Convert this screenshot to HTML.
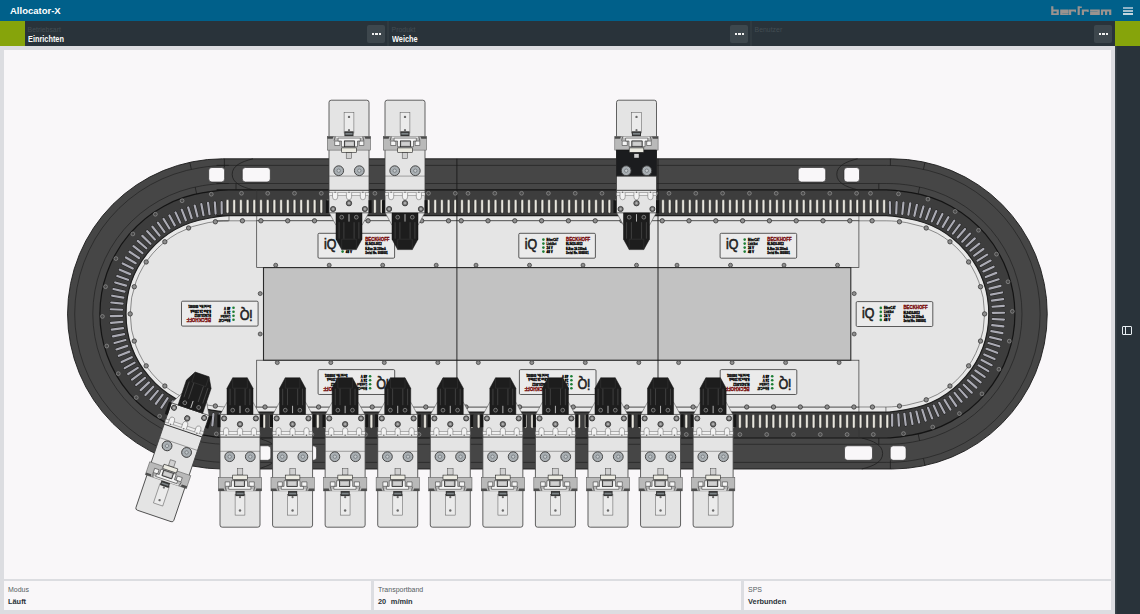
<!DOCTYPE html>
<html><head><meta charset="utf-8"><style>
html,body{margin:0;padding:0}
body{width:1140px;height:614px;overflow:hidden;position:relative;background:#dcdde1;font-family:"Liberation Sans",sans-serif}
.t{position:absolute;white-space:nowrap;line-height:1}
#hdr{position:absolute;left:0;top:0;width:1140px;height:21px;background:#00608a}
#bar{position:absolute;left:0;top:21px;width:1140px;height:25px;background:#29333a}
.lab{font-size:6.9px;color:#434d53;transform-origin:0 100%;transform:scale(1,1.1)}
.val{font-size:7.5px;font-weight:bold;color:#fbfbfb;transform-origin:0 100%;transform:scale(0.98,1.14)}
.btn{position:absolute;width:18px;height:18px;border-radius:2px;background:#3d474d}
.btn i{position:absolute;top:7.7px;width:2.2px;height:2.2px;background:#f0f0f0}
#side{position:absolute;left:1115px;top:46px;width:25px;height:568px;background:#29333a;box-shadow:inset 1.5px 0 0 #3a444a}
#card{position:absolute;left:4px;top:50.4px;width:1107px;height:528.2px;background:#f9f7f9}
.fc{position:absolute;top:581px;width:367px;height:28.8px;background:#f9f7f9}
.flab{font-size:7px;color:#555d62}
.fval{font-size:7.4px;font-weight:bold;color:#2a3338;word-spacing:2.6px}
</style></head>
<body>
<div id="hdr"></div>
<div class="t" style="left:10px;top:5.6px;font-size:9.5px;font-weight:bold;color:#fff">Allocator-X</div>
<svg style="position:absolute;left:0;top:0" width="1140" height="22"><path d="M1051.2,6.2h2.2v8.8h-2.2zM1051.2,9.5h7.6v1.9h-7.6zM1051.2,13.2h7.6v1.8h-7.6zM1056.6,9.5h2.2v5.5h-2.2zM1060.2,9.5h8.5v1.9h-8.5zM1060.2,9.5h2.1v5.5h-2.1zM1060.2,13.2h8.5v1.8h-8.5zM1060.2,11.5h8.5v1.4h-8.5zM1066.6,9.5h2.1v3.4h-2.1zM1069.0,9.5h2.2v5.5h-2.2zM1069.0,9.5h7.0v1.9h-7.0zM1074.6,9.5h1.4v2.7h-1.4zM1077.6,6.2h2.2v8.8h-2.2zM1077.6,6.6h4.2v1.4h-4.2zM1081.8,9.5h2.2v5.5h-2.2zM1081.8,9.5h6.9v1.9h-6.9zM1087.3,9.5h1.4v2.6h-1.4zM1090.1,9.5h9.7v1.9h-9.7zM1097.6,9.5h2.2v5.5h-2.2zM1090.1,11.8h9.7v1.4h-9.7zM1090.1,11.8h2.1v3.2h-2.1zM1090.1,13.2h9.7v1.8h-9.7zM1100.9,9.5h10.4v1.9h-10.4zM1100.9,9.5h2.2v5.5h-2.2zM1105.0,9.5h2.2v5.5h-2.2zM1109.1,9.5h2.2v5.5h-2.2z" fill="#9a938f"/></svg>
<div style="position:absolute;left:1122.8px;top:7.1px;width:10px;height:1.5px;background:#8db3c7"></div>
<div style="position:absolute;left:1122.8px;top:10.1px;width:10px;height:1.5px;background:#a3bfce"></div>
<div style="position:absolute;left:1122.8px;top:13.1px;width:10px;height:1.5px;background:#c3d6df"></div>
<div id="bar"></div>
<div style="position:absolute;left:0;top:21px;width:25px;height:25px;background:#86a40b"></div>
<div style="position:absolute;left:1115px;top:21px;width:25px;height:25px;background:#86a40b"></div>
<div class="t lab" style="left:27.6px;top:27.2px">Betriebsart</div>
<div class="t val" style="left:27.6px;top:35.8px">Einrichten</div>
<div class="btn" style="left:367.4px;top:25px"><i style="left:4.2px"></i><i style="left:8px"></i><i style="left:11.8px"></i></div>
<div style="position:absolute;left:387.4px;top:21px;width:1.5px;height:25px;background:#303a40"></div>
<div class="t lab" style="left:391.6px;top:27.2px">Produkt</div>
<div class="t val" style="left:391.6px;top:35.8px">Weiche</div>
<div class="btn" style="left:730.4px;top:25px"><i style="left:4.2px"></i><i style="left:8px"></i><i style="left:11.8px"></i></div>
<div style="position:absolute;left:750.4px;top:21px;width:1.5px;height:25px;background:#303a40"></div>
<div class="t lab" style="left:754.6px;top:27.2px">Benutzer</div>
<div class="btn" style="left:1094.4px;top:25px"><i style="left:4.2px"></i><i style="left:8px"></i><i style="left:11.8px"></i></div>
<div id="side"></div>
<div style="position:absolute;left:1122.1px;top:325.6px;width:8px;height:7.8px;border:1.1px solid #e8eef2;border-radius:1px"></div>
<div style="position:absolute;left:1125.4px;top:325.6px;width:1.1px;height:9.8px;background:#e8eef2"></div>
<div id="card"></div>
<div class="fc" style="left:4px"></div>
<div class="t flab" style="left:8px;top:586.4px">Modus</div>
<div class="t fval" style="left:8px;top:598.2px">Läuft</div>
<div class="fc" style="left:374px"></div>
<div class="t flab" style="left:378px;top:586.4px">Transportband</div>
<div class="t fval" style="left:378px;top:598.2px">20 m/min</div>
<div class="fc" style="left:744px"></div>
<div class="t flab" style="left:748px;top:586.4px">SPS</div>
<div class="t fval" style="left:748px;top:598.2px">Verbunden</div>
<svg style="position:absolute;left:0;top:0" width="1140" height="614" viewBox="0 0 1140 614">
<path d="M222.60,158.80 H892.20 A155.10,155.10 0 0 1 892.20,469.00 H222.60 A155.10,155.10 0 0 1 222.60,158.80 Z" fill="#464646" stroke="#1c1c1c" stroke-width="0.9"/>
<path d="M216.60,165.40 H886.20 C897.77,165.40 903.91,166.01 915.34,167.82 A147.90,147.90 0 0 1 915.34,459.98 C903.91,461.79 897.77,462.40 886.20,462.40 H228.60 C217.03,462.40 210.89,461.79 199.46,459.98 A147.90,147.90 0 0 1 199.46,167.82 C210.89,166.01 217.03,165.40 228.60,165.40 Z" fill="none" stroke="#222" stroke-width="0.7"/>
<path d="M216.60,183.50 H886.20 C896.35,183.50 902.48,184.11 912.51,185.70 A129.80,129.80 0 0 1 912.51,442.10 C902.48,443.69 896.35,444.30 886.20,444.30 H228.60 C218.45,444.30 212.32,443.69 202.29,442.10 A129.80,129.80 0 0 1 202.29,185.70 C212.32,184.11 218.45,183.50 228.60,183.50 Z" fill="none" stroke="#222" stroke-width="0.7"/>
<path d="M253.0,158.8 C241.0,161.8 232.2,165.8 232.2,174.3 C232.2,182.8 241.0,186.8 253.0,189.8 M857.6,158.8 C845.6,161.8 836.8000000000001,165.8 836.8000000000001,174.3 C836.8000000000001,182.8 845.6,186.8 857.6,189.8 M224.4,158.8 V167.5 M236,183.5 V189.8 M890.4,158.8 V165.4 M878.8,183.5 V189.8 M191.35,169.34 L189.82,162.3 M195.17,187.03 L196.67,193.97 M923.45,169.34 L924.98,162.3 M919.63,187.03 L918.13,193.97" fill="none" stroke="#1a1a1a" stroke-width="0.7"/>
<path d="M253.0,158.8 C241.0,161.8 232.2,165.8 232.2,174.3 C232.2,182.8 241.0,186.8 253.0,189.8 M857.6,158.8 C845.6,161.8 836.8000000000001,165.8 836.8000000000001,174.3 C836.8000000000001,182.8 845.6,186.8 857.6,189.8 M224.4,158.8 V167.5 M236,183.5 V189.8 M890.4,158.8 V165.4 M878.8,183.5 V189.8 M191.35,169.34 L189.82,162.3 M195.17,187.03 L196.67,193.97 M923.45,169.34 L924.98,162.3 M919.63,187.03 L918.13,193.97" fill="none" stroke="#1a1a1a" stroke-width="0.7" transform="rotate(180 557.4 313.9)"/>
<rect x="208.7" y="167.5" width="15.9" height="14.5" rx="3.2" fill="#f9f7f9" stroke="#222" stroke-width="0.6"/>
<rect x="208.7" y="167.5" width="15.9" height="14.5" rx="3.2" fill="#f9f7f9" stroke="#222" stroke-width="0.6" transform="rotate(180 557.4 313.9)"/>
<rect x="242.3" y="167.5" width="28" height="14.5" rx="3.2" fill="#f9f7f9" stroke="#222" stroke-width="0.6"/>
<rect x="242.3" y="167.5" width="28" height="14.5" rx="3.2" fill="#f9f7f9" stroke="#222" stroke-width="0.6" transform="rotate(180 557.4 313.9)"/>
<rect x="798.2" y="167.5" width="27.5" height="14.5" rx="3.2" fill="#f9f7f9" stroke="#222" stroke-width="0.6"/>
<rect x="798.2" y="167.5" width="27.5" height="14.5" rx="3.2" fill="#f9f7f9" stroke="#222" stroke-width="0.6" transform="rotate(180 557.4 313.9)"/>
<rect x="844" y="167.5" width="15.5" height="14.5" rx="3.2" fill="#f9f7f9" stroke="#222" stroke-width="0.6"/>
<rect x="844" y="167.5" width="15.5" height="14.5" rx="3.2" fill="#f9f7f9" stroke="#222" stroke-width="0.6" transform="rotate(180 557.4 313.9)"/>
<path d="M216.60,189.80 H886.20 C895.80,189.80 901.92,191.21 911.39,192.71 A122.70,122.70 0 0 1 911.39,435.09 C901.92,436.59 895.80,438.00 886.20,438.00 H228.60 C219.00,438.00 212.88,436.59 203.41,435.09 A122.70,122.70 0 0 1 203.41,192.71 C212.88,191.21 219.00,189.80 228.60,189.80 Z" fill="#3d3d3d" stroke="#141414" stroke-width="1.2"/>
<g fill="#e8e6de" stroke="#161616" stroke-width="0.45"><rect x="226.15" y="199.6" width="2.7" height="13.6" rx="1.1"/><rect x="885.95" y="414.6" width="2.7" height="13.6" rx="1.1"/><rect x="232.85" y="199.6" width="2.7" height="13.6" rx="1.1"/><rect x="879.25" y="414.6" width="2.7" height="13.6" rx="1.1"/><rect x="239.55" y="199.6" width="2.7" height="13.6" rx="1.1"/><rect x="872.55" y="414.6" width="2.7" height="13.6" rx="1.1"/><rect x="246.25" y="199.6" width="2.7" height="13.6" rx="1.1"/><rect x="865.85" y="414.6" width="2.7" height="13.6" rx="1.1"/><rect x="252.95" y="199.6" width="2.7" height="13.6" rx="1.1"/><rect x="859.15" y="414.6" width="2.7" height="13.6" rx="1.1"/><rect x="259.65" y="199.6" width="2.7" height="13.6" rx="1.1"/><rect x="852.45" y="414.6" width="2.7" height="13.6" rx="1.1"/><rect x="266.35" y="199.6" width="2.7" height="13.6" rx="1.1"/><rect x="845.75" y="414.6" width="2.7" height="13.6" rx="1.1"/><rect x="273.05" y="199.6" width="2.7" height="13.6" rx="1.1"/><rect x="839.05" y="414.6" width="2.7" height="13.6" rx="1.1"/><rect x="279.75" y="199.6" width="2.7" height="13.6" rx="1.1"/><rect x="832.35" y="414.6" width="2.7" height="13.6" rx="1.1"/><rect x="286.45" y="199.6" width="2.7" height="13.6" rx="1.1"/><rect x="825.65" y="414.6" width="2.7" height="13.6" rx="1.1"/><rect x="293.15" y="199.6" width="2.7" height="13.6" rx="1.1"/><rect x="818.95" y="414.6" width="2.7" height="13.6" rx="1.1"/><rect x="299.85" y="199.6" width="2.7" height="13.6" rx="1.1"/><rect x="812.25" y="414.6" width="2.7" height="13.6" rx="1.1"/><rect x="306.55" y="199.6" width="2.7" height="13.6" rx="1.1"/><rect x="805.55" y="414.6" width="2.7" height="13.6" rx="1.1"/><rect x="313.25" y="199.6" width="2.7" height="13.6" rx="1.1"/><rect x="798.85" y="414.6" width="2.7" height="13.6" rx="1.1"/><rect x="319.95" y="199.6" width="2.7" height="13.6" rx="1.1"/><rect x="792.15" y="414.6" width="2.7" height="13.6" rx="1.1"/><rect x="326.65" y="199.6" width="2.7" height="13.6" rx="1.1"/><rect x="785.45" y="414.6" width="2.7" height="13.6" rx="1.1"/><rect x="333.35" y="199.6" width="2.7" height="13.6" rx="1.1"/><rect x="778.75" y="414.6" width="2.7" height="13.6" rx="1.1"/><rect x="340.05" y="199.6" width="2.7" height="13.6" rx="1.1"/><rect x="772.05" y="414.6" width="2.7" height="13.6" rx="1.1"/><rect x="346.75" y="199.6" width="2.7" height="13.6" rx="1.1"/><rect x="765.35" y="414.6" width="2.7" height="13.6" rx="1.1"/><rect x="353.45" y="199.6" width="2.7" height="13.6" rx="1.1"/><rect x="758.65" y="414.6" width="2.7" height="13.6" rx="1.1"/><rect x="360.15" y="199.6" width="2.7" height="13.6" rx="1.1"/><rect x="751.95" y="414.6" width="2.7" height="13.6" rx="1.1"/><rect x="366.85" y="199.6" width="2.7" height="13.6" rx="1.1"/><rect x="745.25" y="414.6" width="2.7" height="13.6" rx="1.1"/><rect x="373.55" y="199.6" width="2.7" height="13.6" rx="1.1"/><rect x="738.55" y="414.6" width="2.7" height="13.6" rx="1.1"/><rect x="380.25" y="199.6" width="2.7" height="13.6" rx="1.1"/><rect x="731.85" y="414.6" width="2.7" height="13.6" rx="1.1"/><rect x="386.95" y="199.6" width="2.7" height="13.6" rx="1.1"/><rect x="725.15" y="414.6" width="2.7" height="13.6" rx="1.1"/><rect x="393.65" y="199.6" width="2.7" height="13.6" rx="1.1"/><rect x="718.45" y="414.6" width="2.7" height="13.6" rx="1.1"/><rect x="400.35" y="199.6" width="2.7" height="13.6" rx="1.1"/><rect x="711.75" y="414.6" width="2.7" height="13.6" rx="1.1"/><rect x="407.05" y="199.6" width="2.7" height="13.6" rx="1.1"/><rect x="705.05" y="414.6" width="2.7" height="13.6" rx="1.1"/><rect x="413.75" y="199.6" width="2.7" height="13.6" rx="1.1"/><rect x="698.35" y="414.6" width="2.7" height="13.6" rx="1.1"/><rect x="420.45" y="199.6" width="2.7" height="13.6" rx="1.1"/><rect x="691.65" y="414.6" width="2.7" height="13.6" rx="1.1"/><rect x="427.15" y="199.6" width="2.7" height="13.6" rx="1.1"/><rect x="684.95" y="414.6" width="2.7" height="13.6" rx="1.1"/><rect x="433.85" y="199.6" width="2.7" height="13.6" rx="1.1"/><rect x="678.25" y="414.6" width="2.7" height="13.6" rx="1.1"/><rect x="440.55" y="199.6" width="2.7" height="13.6" rx="1.1"/><rect x="671.55" y="414.6" width="2.7" height="13.6" rx="1.1"/><rect x="447.25" y="199.6" width="2.7" height="13.6" rx="1.1"/><rect x="664.85" y="414.6" width="2.7" height="13.6" rx="1.1"/><rect x="453.95" y="199.6" width="2.7" height="13.6" rx="1.1"/><rect x="658.15" y="414.6" width="2.7" height="13.6" rx="1.1"/><rect x="460.65" y="199.6" width="2.7" height="13.6" rx="1.1"/><rect x="651.45" y="414.6" width="2.7" height="13.6" rx="1.1"/><rect x="467.35" y="199.6" width="2.7" height="13.6" rx="1.1"/><rect x="644.75" y="414.6" width="2.7" height="13.6" rx="1.1"/><rect x="474.05" y="199.6" width="2.7" height="13.6" rx="1.1"/><rect x="638.05" y="414.6" width="2.7" height="13.6" rx="1.1"/><rect x="480.75" y="199.6" width="2.7" height="13.6" rx="1.1"/><rect x="631.35" y="414.6" width="2.7" height="13.6" rx="1.1"/><rect x="487.45" y="199.6" width="2.7" height="13.6" rx="1.1"/><rect x="624.65" y="414.6" width="2.7" height="13.6" rx="1.1"/><rect x="494.15" y="199.6" width="2.7" height="13.6" rx="1.1"/><rect x="617.95" y="414.6" width="2.7" height="13.6" rx="1.1"/><rect x="500.85" y="199.6" width="2.7" height="13.6" rx="1.1"/><rect x="611.25" y="414.6" width="2.7" height="13.6" rx="1.1"/><rect x="507.55" y="199.6" width="2.7" height="13.6" rx="1.1"/><rect x="604.55" y="414.6" width="2.7" height="13.6" rx="1.1"/><rect x="514.25" y="199.6" width="2.7" height="13.6" rx="1.1"/><rect x="597.85" y="414.6" width="2.7" height="13.6" rx="1.1"/><rect x="520.95" y="199.6" width="2.7" height="13.6" rx="1.1"/><rect x="591.15" y="414.6" width="2.7" height="13.6" rx="1.1"/><rect x="527.65" y="199.6" width="2.7" height="13.6" rx="1.1"/><rect x="584.45" y="414.6" width="2.7" height="13.6" rx="1.1"/><rect x="534.35" y="199.6" width="2.7" height="13.6" rx="1.1"/><rect x="577.75" y="414.6" width="2.7" height="13.6" rx="1.1"/><rect x="541.05" y="199.6" width="2.7" height="13.6" rx="1.1"/><rect x="571.05" y="414.6" width="2.7" height="13.6" rx="1.1"/><rect x="547.75" y="199.6" width="2.7" height="13.6" rx="1.1"/><rect x="564.35" y="414.6" width="2.7" height="13.6" rx="1.1"/><rect x="554.45" y="199.6" width="2.7" height="13.6" rx="1.1"/><rect x="557.65" y="414.6" width="2.7" height="13.6" rx="1.1"/><rect x="561.15" y="199.6" width="2.7" height="13.6" rx="1.1"/><rect x="550.95" y="414.6" width="2.7" height="13.6" rx="1.1"/><rect x="567.85" y="199.6" width="2.7" height="13.6" rx="1.1"/><rect x="544.25" y="414.6" width="2.7" height="13.6" rx="1.1"/><rect x="574.55" y="199.6" width="2.7" height="13.6" rx="1.1"/><rect x="537.55" y="414.6" width="2.7" height="13.6" rx="1.1"/><rect x="581.25" y="199.6" width="2.7" height="13.6" rx="1.1"/><rect x="530.85" y="414.6" width="2.7" height="13.6" rx="1.1"/><rect x="587.95" y="199.6" width="2.7" height="13.6" rx="1.1"/><rect x="524.15" y="414.6" width="2.7" height="13.6" rx="1.1"/><rect x="594.65" y="199.6" width="2.7" height="13.6" rx="1.1"/><rect x="517.45" y="414.6" width="2.7" height="13.6" rx="1.1"/><rect x="601.35" y="199.6" width="2.7" height="13.6" rx="1.1"/><rect x="510.75" y="414.6" width="2.7" height="13.6" rx="1.1"/><rect x="608.05" y="199.6" width="2.7" height="13.6" rx="1.1"/><rect x="504.05" y="414.6" width="2.7" height="13.6" rx="1.1"/><rect x="614.75" y="199.6" width="2.7" height="13.6" rx="1.1"/><rect x="497.35" y="414.6" width="2.7" height="13.6" rx="1.1"/><rect x="621.45" y="199.6" width="2.7" height="13.6" rx="1.1"/><rect x="490.65" y="414.6" width="2.7" height="13.6" rx="1.1"/><rect x="628.15" y="199.6" width="2.7" height="13.6" rx="1.1"/><rect x="483.95" y="414.6" width="2.7" height="13.6" rx="1.1"/><rect x="634.85" y="199.6" width="2.7" height="13.6" rx="1.1"/><rect x="477.25" y="414.6" width="2.7" height="13.6" rx="1.1"/><rect x="641.55" y="199.6" width="2.7" height="13.6" rx="1.1"/><rect x="470.55" y="414.6" width="2.7" height="13.6" rx="1.1"/><rect x="648.25" y="199.6" width="2.7" height="13.6" rx="1.1"/><rect x="463.85" y="414.6" width="2.7" height="13.6" rx="1.1"/><rect x="654.95" y="199.6" width="2.7" height="13.6" rx="1.1"/><rect x="457.15" y="414.6" width="2.7" height="13.6" rx="1.1"/><rect x="661.65" y="199.6" width="2.7" height="13.6" rx="1.1"/><rect x="450.45" y="414.6" width="2.7" height="13.6" rx="1.1"/><rect x="668.35" y="199.6" width="2.7" height="13.6" rx="1.1"/><rect x="443.75" y="414.6" width="2.7" height="13.6" rx="1.1"/><rect x="675.05" y="199.6" width="2.7" height="13.6" rx="1.1"/><rect x="437.05" y="414.6" width="2.7" height="13.6" rx="1.1"/><rect x="681.75" y="199.6" width="2.7" height="13.6" rx="1.1"/><rect x="430.35" y="414.6" width="2.7" height="13.6" rx="1.1"/><rect x="688.45" y="199.6" width="2.7" height="13.6" rx="1.1"/><rect x="423.65" y="414.6" width="2.7" height="13.6" rx="1.1"/><rect x="695.15" y="199.6" width="2.7" height="13.6" rx="1.1"/><rect x="416.95" y="414.6" width="2.7" height="13.6" rx="1.1"/><rect x="701.85" y="199.6" width="2.7" height="13.6" rx="1.1"/><rect x="410.25" y="414.6" width="2.7" height="13.6" rx="1.1"/><rect x="708.55" y="199.6" width="2.7" height="13.6" rx="1.1"/><rect x="403.55" y="414.6" width="2.7" height="13.6" rx="1.1"/><rect x="715.25" y="199.6" width="2.7" height="13.6" rx="1.1"/><rect x="396.85" y="414.6" width="2.7" height="13.6" rx="1.1"/><rect x="721.95" y="199.6" width="2.7" height="13.6" rx="1.1"/><rect x="390.15" y="414.6" width="2.7" height="13.6" rx="1.1"/><rect x="728.65" y="199.6" width="2.7" height="13.6" rx="1.1"/><rect x="383.45" y="414.6" width="2.7" height="13.6" rx="1.1"/><rect x="735.35" y="199.6" width="2.7" height="13.6" rx="1.1"/><rect x="376.75" y="414.6" width="2.7" height="13.6" rx="1.1"/><rect x="742.05" y="199.6" width="2.7" height="13.6" rx="1.1"/><rect x="370.05" y="414.6" width="2.7" height="13.6" rx="1.1"/><rect x="748.75" y="199.6" width="2.7" height="13.6" rx="1.1"/><rect x="363.35" y="414.6" width="2.7" height="13.6" rx="1.1"/><rect x="755.45" y="199.6" width="2.7" height="13.6" rx="1.1"/><rect x="356.65" y="414.6" width="2.7" height="13.6" rx="1.1"/><rect x="762.15" y="199.6" width="2.7" height="13.6" rx="1.1"/><rect x="349.95" y="414.6" width="2.7" height="13.6" rx="1.1"/><rect x="768.85" y="199.6" width="2.7" height="13.6" rx="1.1"/><rect x="343.25" y="414.6" width="2.7" height="13.6" rx="1.1"/><rect x="775.55" y="199.6" width="2.7" height="13.6" rx="1.1"/><rect x="336.55" y="414.6" width="2.7" height="13.6" rx="1.1"/><rect x="782.25" y="199.6" width="2.7" height="13.6" rx="1.1"/><rect x="329.85" y="414.6" width="2.7" height="13.6" rx="1.1"/><rect x="788.95" y="199.6" width="2.7" height="13.6" rx="1.1"/><rect x="323.15" y="414.6" width="2.7" height="13.6" rx="1.1"/><rect x="795.65" y="199.6" width="2.7" height="13.6" rx="1.1"/><rect x="316.45" y="414.6" width="2.7" height="13.6" rx="1.1"/><rect x="802.35" y="199.6" width="2.7" height="13.6" rx="1.1"/><rect x="309.75" y="414.6" width="2.7" height="13.6" rx="1.1"/><rect x="809.05" y="199.6" width="2.7" height="13.6" rx="1.1"/><rect x="303.05" y="414.6" width="2.7" height="13.6" rx="1.1"/><rect x="815.75" y="199.6" width="2.7" height="13.6" rx="1.1"/><rect x="296.35" y="414.6" width="2.7" height="13.6" rx="1.1"/><rect x="822.45" y="199.6" width="2.7" height="13.6" rx="1.1"/><rect x="289.65" y="414.6" width="2.7" height="13.6" rx="1.1"/><rect x="829.15" y="199.6" width="2.7" height="13.6" rx="1.1"/><rect x="282.95" y="414.6" width="2.7" height="13.6" rx="1.1"/><rect x="835.85" y="199.6" width="2.7" height="13.6" rx="1.1"/><rect x="276.25" y="414.6" width="2.7" height="13.6" rx="1.1"/><rect x="842.55" y="199.6" width="2.7" height="13.6" rx="1.1"/><rect x="269.55" y="414.6" width="2.7" height="13.6" rx="1.1"/><rect x="849.25" y="199.6" width="2.7" height="13.6" rx="1.1"/><rect x="262.85" y="414.6" width="2.7" height="13.6" rx="1.1"/><rect x="855.95" y="199.6" width="2.7" height="13.6" rx="1.1"/><rect x="256.15" y="414.6" width="2.7" height="13.6" rx="1.1"/><rect x="862.65" y="199.6" width="2.7" height="13.6" rx="1.1"/><rect x="249.45" y="414.6" width="2.7" height="13.6" rx="1.1"/><rect x="869.35" y="199.6" width="2.7" height="13.6" rx="1.1"/><rect x="242.75" y="414.6" width="2.7" height="13.6" rx="1.1"/><rect x="876.05" y="199.6" width="2.7" height="13.6" rx="1.1"/><rect x="236.05" y="414.6" width="2.7" height="13.6" rx="1.1"/><rect x="882.75" y="199.6" width="2.7" height="13.6" rx="1.1"/><rect x="229.35" y="414.6" width="2.7" height="13.6" rx="1.1"/></g>
<path d="M221.72,213.3L221.62,202M215.61,213.54L214.82,202.27M209.52,214.15L208.05,202.95M203.48,215.13L201.33,204.04M197.51,216.48L194.7,205.53M191.64,218.18L188.16,207.43M185.88,220.24L181.75,209.72M180.25,222.65L175.49,212.4M174.78,225.39L169.41,215.45M169.49,228.46L163.53,218.86M164.4,231.85L157.86,222.63M159.52,235.54L152.43,226.73M154.87,239.52L147.26,231.16M150.47,243.77L142.37,235.89M146.34,248.29L137.78,240.92M142.5,253.04L133.5,246.21M138.94,258.02L129.55,251.75M135.7,263.21L125.94,257.52M132.78,268.59L122.69,263.5M130.19,274.13L119.81,269.67M127.95,279.82L117.32,276M126.05,285.64L115.21,282.47M124.51,291.56L113.49,289.05M123.34,297.56L112.19,295.73M122.53,303.63L111.28,302.48M122.09,309.73L110.8,309.26M122.02,315.85L110.72,316.07M122.32,321.96L111.06,322.86M123,328.04L111.81,329.63M124.04,334.07L112.97,336.33M125.45,340.02L114.54,342.96M127.22,345.88L116.5,349.47M129.34,351.62L118.86,355.85M131.8,357.22L121.6,362.08M134.6,362.66L124.72,368.13M137.73,367.92L128.2,373.98M141.17,372.97L132.03,379.61M144.91,377.81L136.19,384.99M148.94,382.42L140.67,390.12M153.24,386.77L145.45,394.96M157.8,390.85L150.52,399.49M162.6,394.65L155.86,403.72M167.62,398.15L161.44,407.61M172.84,401.33L167.25,411.15M178.25,404.2L173.27,414.34M183.82,406.72L179.46,417.15M189.53,408.91L185.82,419.58M195.37,410.74L192.31,421.62M201.31,412.22L198.91,423.26M207.32,413.33L205.61,424.5M213.39,414.08L212.36,425.33M219.5,414.45L219.15,425.75M890.09,213.32L889.86,202.02M896.21,213.38L896.66,202.09M902.31,213.81L903.45,202.57M908.38,214.61L910.2,203.46M914.39,215.78L916.88,204.75M920.31,217.31L923.47,206.46M926.13,219.19L929.94,208.56M931.82,221.43L936.27,211.04M937.37,224.01L942.44,213.91M942.75,226.92L948.43,217.15M947.94,230.16L954.21,220.75M952.93,233.7L959.75,224.69M957.69,237.54L965.05,228.96M962.22,241.66L970.08,233.55M966.48,246.05L974.82,238.43M970.46,250.69L979.25,243.59M974.16,255.57L983.37,249.01M977.56,260.66L987.14,254.68M980.63,265.94L990.57,260.56M983.39,271.41L993.63,266.64M985.8,277.03L996.31,272.89M987.87,282.79L998.61,279.29M989.58,288.66L1000.52,285.83M990.94,294.63L1002.03,292.46M991.93,300.66L1003.13,299.18M992.55,306.75L1003.82,305.95M992.79,312.86L1004.09,312.75M992.67,318.98L1003.96,319.55M992.18,325.08L1003.41,326.33M991.31,331.14L1002.45,333.07M990.08,337.13L1001.08,339.74M988.49,343.04L999.3,346.31M986.54,348.83L997.14,352.76M984.24,354.5L994.58,359.07M981.6,360.02L991.65,365.21M978.63,365.37L988.34,371.16M975.35,370.53L984.68,376.89M971.75,375.48L980.68,382.4M967.86,380.2L976.36,387.65M963.69,384.68L971.72,392.63M959.25,388.89L966.78,397.32M954.57,392.83L961.58,401.7M949.66,396.48L956.11,405.75M944.53,399.82L950.41,409.47M939.21,402.84L944.49,412.83M933.72,405.53L938.38,415.83M928.07,407.89L932.1,418.44M922.29,409.89L925.67,420.68M916.4,411.55L919.12,422.51M910.42,412.84L912.47,423.95M904.37,413.76L905.74,424.98M898.28,414.32L898.96,425.6M892.16,414.5L892.16,425.8" stroke="#1c1c1c" stroke-width="3.1" stroke-linecap="round" fill="none"/>
<path d="M221.72,213.3L221.62,202M215.61,213.54L214.82,202.27M209.52,214.15L208.05,202.95M203.48,215.13L201.33,204.04M197.51,216.48L194.7,205.53M191.64,218.18L188.16,207.43M185.88,220.24L181.75,209.72M180.25,222.65L175.49,212.4M174.78,225.39L169.41,215.45M169.49,228.46L163.53,218.86M164.4,231.85L157.86,222.63M159.52,235.54L152.43,226.73M154.87,239.52L147.26,231.16M150.47,243.77L142.37,235.89M146.34,248.29L137.78,240.92M142.5,253.04L133.5,246.21M138.94,258.02L129.55,251.75M135.7,263.21L125.94,257.52M132.78,268.59L122.69,263.5M130.19,274.13L119.81,269.67M127.95,279.82L117.32,276M126.05,285.64L115.21,282.47M124.51,291.56L113.49,289.05M123.34,297.56L112.19,295.73M122.53,303.63L111.28,302.48M122.09,309.73L110.8,309.26M122.02,315.85L110.72,316.07M122.32,321.96L111.06,322.86M123,328.04L111.81,329.63M124.04,334.07L112.97,336.33M125.45,340.02L114.54,342.96M127.22,345.88L116.5,349.47M129.34,351.62L118.86,355.85M131.8,357.22L121.6,362.08M134.6,362.66L124.72,368.13M137.73,367.92L128.2,373.98M141.17,372.97L132.03,379.61M144.91,377.81L136.19,384.99M148.94,382.42L140.67,390.12M153.24,386.77L145.45,394.96M157.8,390.85L150.52,399.49M162.6,394.65L155.86,403.72M167.62,398.15L161.44,407.61M172.84,401.33L167.25,411.15M178.25,404.2L173.27,414.34M183.82,406.72L179.46,417.15M189.53,408.91L185.82,419.58M195.37,410.74L192.31,421.62M201.31,412.22L198.91,423.26M207.32,413.33L205.61,424.5M213.39,414.08L212.36,425.33M219.5,414.45L219.15,425.75M890.09,213.32L889.86,202.02M896.21,213.38L896.66,202.09M902.31,213.81L903.45,202.57M908.38,214.61L910.2,203.46M914.39,215.78L916.88,204.75M920.31,217.31L923.47,206.46M926.13,219.19L929.94,208.56M931.82,221.43L936.27,211.04M937.37,224.01L942.44,213.91M942.75,226.92L948.43,217.15M947.94,230.16L954.21,220.75M952.93,233.7L959.75,224.69M957.69,237.54L965.05,228.96M962.22,241.66L970.08,233.55M966.48,246.05L974.82,238.43M970.46,250.69L979.25,243.59M974.16,255.57L983.37,249.01M977.56,260.66L987.14,254.68M980.63,265.94L990.57,260.56M983.39,271.41L993.63,266.64M985.8,277.03L996.31,272.89M987.87,282.79L998.61,279.29M989.58,288.66L1000.52,285.83M990.94,294.63L1002.03,292.46M991.93,300.66L1003.13,299.18M992.55,306.75L1003.82,305.95M992.79,312.86L1004.09,312.75M992.67,318.98L1003.96,319.55M992.18,325.08L1003.41,326.33M991.31,331.14L1002.45,333.07M990.08,337.13L1001.08,339.74M988.49,343.04L999.3,346.31M986.54,348.83L997.14,352.76M984.24,354.5L994.58,359.07M981.6,360.02L991.65,365.21M978.63,365.37L988.34,371.16M975.35,370.53L984.68,376.89M971.75,375.48L980.68,382.4M967.86,380.2L976.36,387.65M963.69,384.68L971.72,392.63M959.25,388.89L966.78,397.32M954.57,392.83L961.58,401.7M949.66,396.48L956.11,405.75M944.53,399.82L950.41,409.47M939.21,402.84L944.49,412.83M933.72,405.53L938.38,415.83M928.07,407.89L932.1,418.44M922.29,409.89L925.67,420.68M916.4,411.55L919.12,422.51M910.42,412.84L912.47,423.95M904.37,413.76L905.74,424.98M898.28,414.32L898.96,425.6M892.16,414.5L892.16,425.8" stroke="#aaaab3" stroke-width="2.2" stroke-linecap="round" fill="none"/>
<path d="M216.60,215.70 H886.20 C893.76,215.70 899.85,217.31 907.31,218.49 A96.60,96.60 0 0 1 907.31,409.31 C899.85,410.49 893.76,412.10 886.20,412.10 H228.60 C221.04,412.10 214.95,410.49 207.49,409.31 A96.60,96.60 0 0 1 207.49,218.49 C214.95,217.31 221.04,215.70 228.60,215.70 Z" fill="#e8e8e8" stroke="#1e1e1e" stroke-width="1.2"/>
<path d="M216.60,220.80 H886.20 C893.43,220.80 899.52,221.51 906.65,222.64 A92.40,92.40 0 0 1 906.65,405.16 C899.52,406.29 893.43,407.00 886.20,407.00 H228.60 C221.37,407.00 215.28,406.29 208.15,405.16 A92.40,92.40 0 0 1 208.15,222.64 C215.28,221.51 221.37,220.80 228.60,220.80 Z" fill="#e5e5e5" stroke="#4a4a4a" stroke-width="0.6"/>
<rect x="256.7" y="220.8" width="602.2" height="46.8" fill="#e5e5e5" stroke="#333" stroke-width="0.7"/>
<rect x="256.7" y="360.2" width="602.2" height="46.8" fill="#e5e5e5" stroke="#333" stroke-width="0.7"/>
<rect x="263.5" y="267.6" width="587.3" height="92.6" fill="#c2c2c2" stroke="#2a2a2a" stroke-width="1.1"/>
<path d="M256.7,189.8 V220.8 M858.9,189.8 V220.8 M256.3,438 V407 M858.9,438 V407 M229,215.7 V220.8 M885.9,412.1 V407" stroke="#333" stroke-width="0.6"/>
<line x1="456.9" y1="158.8" x2="456.9" y2="412.1" stroke="#1a1a1a" stroke-width="0.9"/>
<line x1="658" y1="158.8" x2="658" y2="412.1" stroke="#1a1a1a" stroke-width="0.9"/>
<circle cx="267.7" cy="193.3" r="1.9" fill="#4a4a4a" stroke="#a0a0a0" stroke-width="0.6"/><circle cx="847.1" cy="434.5" r="1.9" fill="#4a4a4a" stroke="#a0a0a0" stroke-width="0.6"/><circle cx="260.9" cy="220.8" r="2.2" fill="#8e8e8e" stroke="#2a2a2a" stroke-width="0.7"/><circle cx="853.9" cy="407" r="2.2" fill="#8e8e8e" stroke="#2a2a2a" stroke-width="0.7"/><circle cx="294.5" cy="193.3" r="1.9" fill="#4a4a4a" stroke="#a0a0a0" stroke-width="0.6"/><circle cx="820.3" cy="434.5" r="1.9" fill="#4a4a4a" stroke="#a0a0a0" stroke-width="0.6"/><circle cx="287.7" cy="220.8" r="2.2" fill="#8e8e8e" stroke="#2a2a2a" stroke-width="0.7"/><circle cx="827.1" cy="407" r="2.2" fill="#8e8e8e" stroke="#2a2a2a" stroke-width="0.7"/><circle cx="321.3" cy="193.3" r="1.9" fill="#4a4a4a" stroke="#a0a0a0" stroke-width="0.6"/><circle cx="793.5" cy="434.5" r="1.9" fill="#4a4a4a" stroke="#a0a0a0" stroke-width="0.6"/><circle cx="314.5" cy="220.8" r="2.2" fill="#8e8e8e" stroke="#2a2a2a" stroke-width="0.7"/><circle cx="800.3" cy="407" r="2.2" fill="#8e8e8e" stroke="#2a2a2a" stroke-width="0.7"/><circle cx="348.1" cy="193.3" r="1.9" fill="#4a4a4a" stroke="#a0a0a0" stroke-width="0.6"/><circle cx="766.7" cy="434.5" r="1.9" fill="#4a4a4a" stroke="#a0a0a0" stroke-width="0.6"/><circle cx="341.3" cy="220.8" r="2.2" fill="#8e8e8e" stroke="#2a2a2a" stroke-width="0.7"/><circle cx="773.5" cy="407" r="2.2" fill="#8e8e8e" stroke="#2a2a2a" stroke-width="0.7"/><circle cx="374.9" cy="193.3" r="1.9" fill="#4a4a4a" stroke="#a0a0a0" stroke-width="0.6"/><circle cx="739.9" cy="434.5" r="1.9" fill="#4a4a4a" stroke="#a0a0a0" stroke-width="0.6"/><circle cx="368.1" cy="220.8" r="2.2" fill="#8e8e8e" stroke="#2a2a2a" stroke-width="0.7"/><circle cx="746.7" cy="407" r="2.2" fill="#8e8e8e" stroke="#2a2a2a" stroke-width="0.7"/><circle cx="401.7" cy="193.3" r="1.9" fill="#4a4a4a" stroke="#a0a0a0" stroke-width="0.6"/><circle cx="713.1" cy="434.5" r="1.9" fill="#4a4a4a" stroke="#a0a0a0" stroke-width="0.6"/><circle cx="394.9" cy="220.8" r="2.2" fill="#8e8e8e" stroke="#2a2a2a" stroke-width="0.7"/><circle cx="719.9" cy="407" r="2.2" fill="#8e8e8e" stroke="#2a2a2a" stroke-width="0.7"/><circle cx="428.5" cy="193.3" r="1.9" fill="#4a4a4a" stroke="#a0a0a0" stroke-width="0.6"/><circle cx="686.3" cy="434.5" r="1.9" fill="#4a4a4a" stroke="#a0a0a0" stroke-width="0.6"/><circle cx="421.7" cy="220.8" r="2.2" fill="#8e8e8e" stroke="#2a2a2a" stroke-width="0.7"/><circle cx="693.1" cy="407" r="2.2" fill="#8e8e8e" stroke="#2a2a2a" stroke-width="0.7"/><circle cx="455.3" cy="193.3" r="1.9" fill="#4a4a4a" stroke="#a0a0a0" stroke-width="0.6"/><circle cx="659.5" cy="434.5" r="1.9" fill="#4a4a4a" stroke="#a0a0a0" stroke-width="0.6"/><circle cx="448.5" cy="220.8" r="2.2" fill="#8e8e8e" stroke="#2a2a2a" stroke-width="0.7"/><circle cx="666.3" cy="407" r="2.2" fill="#8e8e8e" stroke="#2a2a2a" stroke-width="0.7"/><circle cx="275.7" cy="265.2" r="2" fill="#8e8e8e" stroke="#2e2e2e" stroke-width="0.65"/><circle cx="839.1" cy="362.6" r="2" fill="#8e8e8e" stroke="#2e2e2e" stroke-width="0.65"/><circle cx="329.2" cy="265.2" r="2" fill="#8e8e8e" stroke="#2e2e2e" stroke-width="0.65"/><circle cx="785.6" cy="362.6" r="2" fill="#8e8e8e" stroke="#2e2e2e" stroke-width="0.65"/><circle cx="382.7" cy="265.2" r="2" fill="#8e8e8e" stroke="#2e2e2e" stroke-width="0.65"/><circle cx="732.1" cy="362.6" r="2" fill="#8e8e8e" stroke="#2e2e2e" stroke-width="0.65"/><circle cx="436.2" cy="265.2" r="2" fill="#8e8e8e" stroke="#2e2e2e" stroke-width="0.65"/><circle cx="678.6" cy="362.6" r="2" fill="#8e8e8e" stroke="#2e2e2e" stroke-width="0.65"/><circle cx="468" cy="193.3" r="1.9" fill="#4a4a4a" stroke="#a0a0a0" stroke-width="0.6"/><circle cx="646.8" cy="434.5" r="1.9" fill="#4a4a4a" stroke="#a0a0a0" stroke-width="0.6"/><circle cx="461.2" cy="220.8" r="2.2" fill="#8e8e8e" stroke="#2a2a2a" stroke-width="0.7"/><circle cx="653.6" cy="407" r="2.2" fill="#8e8e8e" stroke="#2a2a2a" stroke-width="0.7"/><circle cx="494.8" cy="193.3" r="1.9" fill="#4a4a4a" stroke="#a0a0a0" stroke-width="0.6"/><circle cx="620" cy="434.5" r="1.9" fill="#4a4a4a" stroke="#a0a0a0" stroke-width="0.6"/><circle cx="488" cy="220.8" r="2.2" fill="#8e8e8e" stroke="#2a2a2a" stroke-width="0.7"/><circle cx="626.8" cy="407" r="2.2" fill="#8e8e8e" stroke="#2a2a2a" stroke-width="0.7"/><circle cx="521.6" cy="193.3" r="1.9" fill="#4a4a4a" stroke="#a0a0a0" stroke-width="0.6"/><circle cx="593.2" cy="434.5" r="1.9" fill="#4a4a4a" stroke="#a0a0a0" stroke-width="0.6"/><circle cx="514.8" cy="220.8" r="2.2" fill="#8e8e8e" stroke="#2a2a2a" stroke-width="0.7"/><circle cx="600" cy="407" r="2.2" fill="#8e8e8e" stroke="#2a2a2a" stroke-width="0.7"/><circle cx="548.4" cy="193.3" r="1.9" fill="#4a4a4a" stroke="#a0a0a0" stroke-width="0.6"/><circle cx="566.4" cy="434.5" r="1.9" fill="#4a4a4a" stroke="#a0a0a0" stroke-width="0.6"/><circle cx="541.6" cy="220.8" r="2.2" fill="#8e8e8e" stroke="#2a2a2a" stroke-width="0.7"/><circle cx="573.2" cy="407" r="2.2" fill="#8e8e8e" stroke="#2a2a2a" stroke-width="0.7"/><circle cx="575.2" cy="193.3" r="1.9" fill="#4a4a4a" stroke="#a0a0a0" stroke-width="0.6"/><circle cx="539.6" cy="434.5" r="1.9" fill="#4a4a4a" stroke="#a0a0a0" stroke-width="0.6"/><circle cx="568.4" cy="220.8" r="2.2" fill="#8e8e8e" stroke="#2a2a2a" stroke-width="0.7"/><circle cx="546.4" cy="407" r="2.2" fill="#8e8e8e" stroke="#2a2a2a" stroke-width="0.7"/><circle cx="602" cy="193.3" r="1.9" fill="#4a4a4a" stroke="#a0a0a0" stroke-width="0.6"/><circle cx="512.8" cy="434.5" r="1.9" fill="#4a4a4a" stroke="#a0a0a0" stroke-width="0.6"/><circle cx="595.2" cy="220.8" r="2.2" fill="#8e8e8e" stroke="#2a2a2a" stroke-width="0.7"/><circle cx="519.6" cy="407" r="2.2" fill="#8e8e8e" stroke="#2a2a2a" stroke-width="0.7"/><circle cx="628.8" cy="193.3" r="1.9" fill="#4a4a4a" stroke="#a0a0a0" stroke-width="0.6"/><circle cx="486" cy="434.5" r="1.9" fill="#4a4a4a" stroke="#a0a0a0" stroke-width="0.6"/><circle cx="622" cy="220.8" r="2.2" fill="#8e8e8e" stroke="#2a2a2a" stroke-width="0.7"/><circle cx="492.8" cy="407" r="2.2" fill="#8e8e8e" stroke="#2a2a2a" stroke-width="0.7"/><circle cx="655.6" cy="193.3" r="1.9" fill="#4a4a4a" stroke="#a0a0a0" stroke-width="0.6"/><circle cx="459.2" cy="434.5" r="1.9" fill="#4a4a4a" stroke="#a0a0a0" stroke-width="0.6"/><circle cx="648.8" cy="220.8" r="2.2" fill="#8e8e8e" stroke="#2a2a2a" stroke-width="0.7"/><circle cx="466" cy="407" r="2.2" fill="#8e8e8e" stroke="#2a2a2a" stroke-width="0.7"/><circle cx="476" cy="265.2" r="2" fill="#8e8e8e" stroke="#2e2e2e" stroke-width="0.65"/><circle cx="638.8" cy="362.6" r="2" fill="#8e8e8e" stroke="#2e2e2e" stroke-width="0.65"/><circle cx="529.5" cy="265.2" r="2" fill="#8e8e8e" stroke="#2e2e2e" stroke-width="0.65"/><circle cx="585.3" cy="362.6" r="2" fill="#8e8e8e" stroke="#2e2e2e" stroke-width="0.65"/><circle cx="583" cy="265.2" r="2" fill="#8e8e8e" stroke="#2e2e2e" stroke-width="0.65"/><circle cx="531.8" cy="362.6" r="2" fill="#8e8e8e" stroke="#2e2e2e" stroke-width="0.65"/><circle cx="636.5" cy="265.2" r="2" fill="#8e8e8e" stroke="#2e2e2e" stroke-width="0.65"/><circle cx="478.3" cy="362.6" r="2" fill="#8e8e8e" stroke="#2e2e2e" stroke-width="0.65"/><circle cx="669" cy="193.3" r="1.9" fill="#4a4a4a" stroke="#a0a0a0" stroke-width="0.6"/><circle cx="445.8" cy="434.5" r="1.9" fill="#4a4a4a" stroke="#a0a0a0" stroke-width="0.6"/><circle cx="662.2" cy="220.8" r="2.2" fill="#8e8e8e" stroke="#2a2a2a" stroke-width="0.7"/><circle cx="452.6" cy="407" r="2.2" fill="#8e8e8e" stroke="#2a2a2a" stroke-width="0.7"/><circle cx="695.8" cy="193.3" r="1.9" fill="#4a4a4a" stroke="#a0a0a0" stroke-width="0.6"/><circle cx="419" cy="434.5" r="1.9" fill="#4a4a4a" stroke="#a0a0a0" stroke-width="0.6"/><circle cx="689" cy="220.8" r="2.2" fill="#8e8e8e" stroke="#2a2a2a" stroke-width="0.7"/><circle cx="425.8" cy="407" r="2.2" fill="#8e8e8e" stroke="#2a2a2a" stroke-width="0.7"/><circle cx="722.6" cy="193.3" r="1.9" fill="#4a4a4a" stroke="#a0a0a0" stroke-width="0.6"/><circle cx="392.2" cy="434.5" r="1.9" fill="#4a4a4a" stroke="#a0a0a0" stroke-width="0.6"/><circle cx="715.8" cy="220.8" r="2.2" fill="#8e8e8e" stroke="#2a2a2a" stroke-width="0.7"/><circle cx="399" cy="407" r="2.2" fill="#8e8e8e" stroke="#2a2a2a" stroke-width="0.7"/><circle cx="749.4" cy="193.3" r="1.9" fill="#4a4a4a" stroke="#a0a0a0" stroke-width="0.6"/><circle cx="365.4" cy="434.5" r="1.9" fill="#4a4a4a" stroke="#a0a0a0" stroke-width="0.6"/><circle cx="742.6" cy="220.8" r="2.2" fill="#8e8e8e" stroke="#2a2a2a" stroke-width="0.7"/><circle cx="372.2" cy="407" r="2.2" fill="#8e8e8e" stroke="#2a2a2a" stroke-width="0.7"/><circle cx="776.2" cy="193.3" r="1.9" fill="#4a4a4a" stroke="#a0a0a0" stroke-width="0.6"/><circle cx="338.6" cy="434.5" r="1.9" fill="#4a4a4a" stroke="#a0a0a0" stroke-width="0.6"/><circle cx="769.4" cy="220.8" r="2.2" fill="#8e8e8e" stroke="#2a2a2a" stroke-width="0.7"/><circle cx="345.4" cy="407" r="2.2" fill="#8e8e8e" stroke="#2a2a2a" stroke-width="0.7"/><circle cx="803" cy="193.3" r="1.9" fill="#4a4a4a" stroke="#a0a0a0" stroke-width="0.6"/><circle cx="311.8" cy="434.5" r="1.9" fill="#4a4a4a" stroke="#a0a0a0" stroke-width="0.6"/><circle cx="796.2" cy="220.8" r="2.2" fill="#8e8e8e" stroke="#2a2a2a" stroke-width="0.7"/><circle cx="318.6" cy="407" r="2.2" fill="#8e8e8e" stroke="#2a2a2a" stroke-width="0.7"/><circle cx="829.8" cy="193.3" r="1.9" fill="#4a4a4a" stroke="#a0a0a0" stroke-width="0.6"/><circle cx="285" cy="434.5" r="1.9" fill="#4a4a4a" stroke="#a0a0a0" stroke-width="0.6"/><circle cx="823" cy="220.8" r="2.2" fill="#8e8e8e" stroke="#2a2a2a" stroke-width="0.7"/><circle cx="291.8" cy="407" r="2.2" fill="#8e8e8e" stroke="#2a2a2a" stroke-width="0.7"/><circle cx="856.6" cy="193.3" r="1.9" fill="#4a4a4a" stroke="#a0a0a0" stroke-width="0.6"/><circle cx="258.2" cy="434.5" r="1.9" fill="#4a4a4a" stroke="#a0a0a0" stroke-width="0.6"/><circle cx="849.8" cy="220.8" r="2.2" fill="#8e8e8e" stroke="#2a2a2a" stroke-width="0.7"/><circle cx="265" cy="407" r="2.2" fill="#8e8e8e" stroke="#2a2a2a" stroke-width="0.7"/><circle cx="677" cy="265.2" r="2" fill="#8e8e8e" stroke="#2e2e2e" stroke-width="0.65"/><circle cx="437.8" cy="362.6" r="2" fill="#8e8e8e" stroke="#2e2e2e" stroke-width="0.65"/><circle cx="730.5" cy="265.2" r="2" fill="#8e8e8e" stroke="#2e2e2e" stroke-width="0.65"/><circle cx="384.3" cy="362.6" r="2" fill="#8e8e8e" stroke="#2e2e2e" stroke-width="0.65"/><circle cx="784" cy="265.2" r="2" fill="#8e8e8e" stroke="#2e2e2e" stroke-width="0.65"/><circle cx="330.8" cy="362.6" r="2" fill="#8e8e8e" stroke="#2e2e2e" stroke-width="0.65"/><circle cx="837.5" cy="265.2" r="2" fill="#8e8e8e" stroke="#2e2e2e" stroke-width="0.65"/><circle cx="277.3" cy="362.6" r="2" fill="#8e8e8e" stroke="#2e2e2e" stroke-width="0.65"/><circle cx="241.5" cy="193.3" r="1.9" fill="#4a4a4a" stroke="#a0a0a0" stroke-width="0.6"/><circle cx="873.3" cy="434.5" r="1.9" fill="#4a4a4a" stroke="#a0a0a0" stroke-width="0.6"/><circle cx="870.5" cy="193.3" r="1.9" fill="#4a4a4a" stroke="#a0a0a0" stroke-width="0.6"/><circle cx="244.3" cy="434.5" r="1.9" fill="#4a4a4a" stroke="#a0a0a0" stroke-width="0.6"/><circle cx="242.4" cy="220.8" r="2.2" fill="#8e8e8e" stroke="#2a2a2a" stroke-width="0.7"/><circle cx="872.4" cy="407" r="2.2" fill="#8e8e8e" stroke="#2a2a2a" stroke-width="0.7"/><circle cx="872.1" cy="220.8" r="2.2" fill="#8e8e8e" stroke="#2a2a2a" stroke-width="0.7"/><circle cx="242.7" cy="407" r="2.2" fill="#8e8e8e" stroke="#2a2a2a" stroke-width="0.7"/><circle cx="260.2" cy="293.6" r="2" fill="#8e8e8e" stroke="#2e2e2e" stroke-width="0.65"/><circle cx="854.2" cy="293.6" r="2" fill="#8e8e8e" stroke="#2e2e2e" stroke-width="0.65"/><circle cx="260.2" cy="334" r="2" fill="#8e8e8e" stroke="#2e2e2e" stroke-width="0.65"/><circle cx="854.2" cy="334" r="2" fill="#8e8e8e" stroke="#2e2e2e" stroke-width="0.65"/><circle cx="215.35" cy="406.02" r="2.2" fill="#8e8e8e" stroke="#2a2a2a" stroke-width="0.7"/><circle cx="188.59" cy="399.81" r="2.2" fill="#8e8e8e" stroke="#2a2a2a" stroke-width="0.7"/><circle cx="164.83" cy="386.01" r="2.2" fill="#8e8e8e" stroke="#2a2a2a" stroke-width="0.7"/><circle cx="146.18" cy="365.84" r="2.2" fill="#8e8e8e" stroke="#2a2a2a" stroke-width="0.7"/><circle cx="134.28" cy="341.07" r="2.2" fill="#8e8e8e" stroke="#2a2a2a" stroke-width="0.7"/><circle cx="130.2" cy="313.9" r="2.2" fill="#8e8e8e" stroke="#2a2a2a" stroke-width="0.7"/><circle cx="134.28" cy="286.73" r="2.2" fill="#8e8e8e" stroke="#2a2a2a" stroke-width="0.7"/><circle cx="146.18" cy="261.96" r="2.2" fill="#8e8e8e" stroke="#2a2a2a" stroke-width="0.7"/><circle cx="164.83" cy="241.79" r="2.2" fill="#8e8e8e" stroke="#2a2a2a" stroke-width="0.7"/><circle cx="188.59" cy="227.99" r="2.2" fill="#8e8e8e" stroke="#2a2a2a" stroke-width="0.7"/><circle cx="215.35" cy="221.78" r="2.2" fill="#8e8e8e" stroke="#2a2a2a" stroke-width="0.7"/><circle cx="216.31" cy="433.94" r="1.9" fill="#4a4a4a" stroke="#a0a0a0" stroke-width="0.6"/><circle cx="186.86" cy="428.66" r="1.9" fill="#4a4a4a" stroke="#a0a0a0" stroke-width="0.6"/><circle cx="159.62" cy="416.28" r="1.9" fill="#4a4a4a" stroke="#a0a0a0" stroke-width="0.6"/><circle cx="136.28" cy="397.55" r="1.9" fill="#4a4a4a" stroke="#a0a0a0" stroke-width="0.6"/><circle cx="118.29" cy="373.64" r="1.9" fill="#4a4a4a" stroke="#a0a0a0" stroke-width="0.6"/><circle cx="106.77" cy="346.02" r="1.9" fill="#4a4a4a" stroke="#a0a0a0" stroke-width="0.6"/><circle cx="102.43" cy="316.42" r="1.9" fill="#4a4a4a" stroke="#a0a0a0" stroke-width="0.6"/><circle cx="105.53" cy="286.66" r="1.9" fill="#4a4a4a" stroke="#a0a0a0" stroke-width="0.6"/><circle cx="115.88" cy="258.58" r="1.9" fill="#4a4a4a" stroke="#a0a0a0" stroke-width="0.6"/><circle cx="132.85" cy="233.94" r="1.9" fill="#4a4a4a" stroke="#a0a0a0" stroke-width="0.6"/><circle cx="155.39" cy="214.25" r="1.9" fill="#4a4a4a" stroke="#a0a0a0" stroke-width="0.6"/><circle cx="182.08" cy="200.74" r="1.9" fill="#4a4a4a" stroke="#a0a0a0" stroke-width="0.6"/><circle cx="211.29" cy="194.23" r="1.9" fill="#4a4a4a" stroke="#a0a0a0" stroke-width="0.6"/><circle cx="899.45" cy="221.78" r="2.2" fill="#8e8e8e" stroke="#2a2a2a" stroke-width="0.7"/><circle cx="926.21" cy="227.99" r="2.2" fill="#8e8e8e" stroke="#2a2a2a" stroke-width="0.7"/><circle cx="949.97" cy="241.79" r="2.2" fill="#8e8e8e" stroke="#2a2a2a" stroke-width="0.7"/><circle cx="968.62" cy="261.96" r="2.2" fill="#8e8e8e" stroke="#2a2a2a" stroke-width="0.7"/><circle cx="980.52" cy="286.73" r="2.2" fill="#8e8e8e" stroke="#2a2a2a" stroke-width="0.7"/><circle cx="984.6" cy="313.9" r="2.2" fill="#8e8e8e" stroke="#2a2a2a" stroke-width="0.7"/><circle cx="980.52" cy="341.07" r="2.2" fill="#8e8e8e" stroke="#2a2a2a" stroke-width="0.7"/><circle cx="968.62" cy="365.84" r="2.2" fill="#8e8e8e" stroke="#2a2a2a" stroke-width="0.7"/><circle cx="949.97" cy="386.01" r="2.2" fill="#8e8e8e" stroke="#2a2a2a" stroke-width="0.7"/><circle cx="926.21" cy="399.81" r="2.2" fill="#8e8e8e" stroke="#2a2a2a" stroke-width="0.7"/><circle cx="899.45" cy="406.02" r="2.2" fill="#8e8e8e" stroke="#2a2a2a" stroke-width="0.7"/><circle cx="898.49" cy="193.86" r="1.9" fill="#4a4a4a" stroke="#a0a0a0" stroke-width="0.6"/><circle cx="927.94" cy="199.14" r="1.9" fill="#4a4a4a" stroke="#a0a0a0" stroke-width="0.6"/><circle cx="955.18" cy="211.52" r="1.9" fill="#4a4a4a" stroke="#a0a0a0" stroke-width="0.6"/><circle cx="978.52" cy="230.25" r="1.9" fill="#4a4a4a" stroke="#a0a0a0" stroke-width="0.6"/><circle cx="996.51" cy="254.16" r="1.9" fill="#4a4a4a" stroke="#a0a0a0" stroke-width="0.6"/><circle cx="1008.03" cy="281.78" r="1.9" fill="#4a4a4a" stroke="#a0a0a0" stroke-width="0.6"/><circle cx="1012.37" cy="311.38" r="1.9" fill="#4a4a4a" stroke="#a0a0a0" stroke-width="0.6"/><circle cx="1009.27" cy="341.14" r="1.9" fill="#4a4a4a" stroke="#a0a0a0" stroke-width="0.6"/><circle cx="998.92" cy="369.22" r="1.9" fill="#4a4a4a" stroke="#a0a0a0" stroke-width="0.6"/><circle cx="981.95" cy="393.86" r="1.9" fill="#4a4a4a" stroke="#a0a0a0" stroke-width="0.6"/><circle cx="959.41" cy="413.55" r="1.9" fill="#4a4a4a" stroke="#a0a0a0" stroke-width="0.6"/><circle cx="932.72" cy="427.06" r="1.9" fill="#4a4a4a" stroke="#a0a0a0" stroke-width="0.6"/><circle cx="903.51" cy="433.57" r="1.9" fill="#4a4a4a" stroke="#a0a0a0" stroke-width="0.6"/>
<g><rect x="318" y="233.3" width="76.6" height="24.9" rx="1.2" fill="#ebebeb" stroke="#333" stroke-width="0.8"/><text x="323.9" y="249.2" font-family="Liberation Sans" font-size="13.8" fill="#222" stroke="#222" stroke-width="0.6" textLength="12.4" lengthAdjust="spacingAndGlyphs">iQ</text><circle cx="342.6" cy="239.6" r="1.3" fill="#1b7d34"/><text x="345.8" y="240.9" font-family="Liberation Sans" font-weight="bold" font-size="3.6" fill="#000" stroke="#000" stroke-width="0.35" textLength="11.7" lengthAdjust="spacingAndGlyphs">EtherCAT</text><circle cx="342.6" cy="243.6" r="1.3" fill="#1b7d34"/><text x="345.8" y="244.9" font-family="Liberation Sans" font-weight="bold" font-size="3.6" fill="#000" stroke="#000" stroke-width="0.35" textLength="9.7" lengthAdjust="spacingAndGlyphs">Link/Act</text><circle cx="342.6" cy="247.6" r="1.3" fill="#1b7d34"/><text x="345.8" y="248.9" font-family="Liberation Sans" font-weight="bold" font-size="3.6" fill="#000" stroke="#000" stroke-width="0.35" textLength="6.2" lengthAdjust="spacingAndGlyphs">24 V</text><circle cx="342.6" cy="251.6" r="1.3" fill="#1b7d34"/><text x="345.8" y="252.9" font-family="Liberation Sans" font-weight="bold" font-size="3.6" fill="#000" stroke="#000" stroke-width="0.35" textLength="6.2" lengthAdjust="spacingAndGlyphs">48 V</text><text x="365.2" y="241.1" font-family="Liberation Sans" font-weight="bold" font-size="5" fill="#a00000" stroke="#500" stroke-width="0.3" textLength="24.3" lengthAdjust="spacingAndGlyphs">BECKHOFF</text><text x="365.2" y="245.3" font-family="Liberation Sans" font-weight="bold" font-size="3.5" fill="#000" stroke="#000" stroke-width="0.35" textLength="16.5" lengthAdjust="spacingAndGlyphs">EL9410-0012</text><text x="365.2" y="249.7" font-family="Liberation Sans" font-weight="bold" font-size="3.5" fill="#000" stroke="#000" stroke-width="0.35" textLength="20.6" lengthAdjust="spacingAndGlyphs">E-Bus 2A 230mA</text><text x="365.2" y="254.1" font-family="Liberation Sans" font-weight="bold" font-size="3.5" fill="#000" stroke="#000" stroke-width="0.35" textLength="22.6" lengthAdjust="spacingAndGlyphs">Serial No. 0000001</text></g>
<g><rect x="518.8" y="233.3" width="76.6" height="24.9" rx="1.2" fill="#ebebeb" stroke="#333" stroke-width="0.8"/><text x="524.7" y="249.2" font-family="Liberation Sans" font-size="13.8" fill="#222" stroke="#222" stroke-width="0.6" textLength="12.4" lengthAdjust="spacingAndGlyphs">iQ</text><circle cx="543.4" cy="239.6" r="1.3" fill="#1b7d34"/><text x="546.6" y="240.9" font-family="Liberation Sans" font-weight="bold" font-size="3.6" fill="#000" stroke="#000" stroke-width="0.35" textLength="11.7" lengthAdjust="spacingAndGlyphs">EtherCAT</text><circle cx="543.4" cy="243.6" r="1.3" fill="#1b7d34"/><text x="546.6" y="244.9" font-family="Liberation Sans" font-weight="bold" font-size="3.6" fill="#000" stroke="#000" stroke-width="0.35" textLength="9.7" lengthAdjust="spacingAndGlyphs">Link/Act</text><circle cx="543.4" cy="247.6" r="1.3" fill="#1b7d34"/><text x="546.6" y="248.9" font-family="Liberation Sans" font-weight="bold" font-size="3.6" fill="#000" stroke="#000" stroke-width="0.35" textLength="6.2" lengthAdjust="spacingAndGlyphs">24 V</text><circle cx="543.4" cy="251.6" r="1.3" fill="#1b7d34"/><text x="546.6" y="252.9" font-family="Liberation Sans" font-weight="bold" font-size="3.6" fill="#000" stroke="#000" stroke-width="0.35" textLength="6.2" lengthAdjust="spacingAndGlyphs">48 V</text><text x="566" y="241.1" font-family="Liberation Sans" font-weight="bold" font-size="5" fill="#a00000" stroke="#500" stroke-width="0.3" textLength="24.3" lengthAdjust="spacingAndGlyphs">BECKHOFF</text><text x="566" y="245.3" font-family="Liberation Sans" font-weight="bold" font-size="3.5" fill="#000" stroke="#000" stroke-width="0.35" textLength="16.5" lengthAdjust="spacingAndGlyphs">EL9410-0012</text><text x="566" y="249.7" font-family="Liberation Sans" font-weight="bold" font-size="3.5" fill="#000" stroke="#000" stroke-width="0.35" textLength="20.6" lengthAdjust="spacingAndGlyphs">E-Bus 2A 230mA</text><text x="566" y="254.1" font-family="Liberation Sans" font-weight="bold" font-size="3.5" fill="#000" stroke="#000" stroke-width="0.35" textLength="22.6" lengthAdjust="spacingAndGlyphs">Serial No. 0000001</text></g>
<g><rect x="720.1" y="233.3" width="76.6" height="24.9" rx="1.2" fill="#ebebeb" stroke="#333" stroke-width="0.8"/><text x="726" y="249.2" font-family="Liberation Sans" font-size="13.8" fill="#222" stroke="#222" stroke-width="0.6" textLength="12.4" lengthAdjust="spacingAndGlyphs">iQ</text><circle cx="744.7" cy="239.6" r="1.3" fill="#1b7d34"/><text x="747.9" y="240.9" font-family="Liberation Sans" font-weight="bold" font-size="3.6" fill="#000" stroke="#000" stroke-width="0.35" textLength="11.7" lengthAdjust="spacingAndGlyphs">EtherCAT</text><circle cx="744.7" cy="243.6" r="1.3" fill="#1b7d34"/><text x="747.9" y="244.9" font-family="Liberation Sans" font-weight="bold" font-size="3.6" fill="#000" stroke="#000" stroke-width="0.35" textLength="9.7" lengthAdjust="spacingAndGlyphs">Link/Act</text><circle cx="744.7" cy="247.6" r="1.3" fill="#1b7d34"/><text x="747.9" y="248.9" font-family="Liberation Sans" font-weight="bold" font-size="3.6" fill="#000" stroke="#000" stroke-width="0.35" textLength="6.2" lengthAdjust="spacingAndGlyphs">24 V</text><circle cx="744.7" cy="251.6" r="1.3" fill="#1b7d34"/><text x="747.9" y="252.9" font-family="Liberation Sans" font-weight="bold" font-size="3.6" fill="#000" stroke="#000" stroke-width="0.35" textLength="6.2" lengthAdjust="spacingAndGlyphs">48 V</text><text x="767.3" y="241.1" font-family="Liberation Sans" font-weight="bold" font-size="5" fill="#a00000" stroke="#500" stroke-width="0.3" textLength="24.3" lengthAdjust="spacingAndGlyphs">BECKHOFF</text><text x="767.3" y="245.3" font-family="Liberation Sans" font-weight="bold" font-size="3.5" fill="#000" stroke="#000" stroke-width="0.35" textLength="16.5" lengthAdjust="spacingAndGlyphs">EL9410-0012</text><text x="767.3" y="249.7" font-family="Liberation Sans" font-weight="bold" font-size="3.5" fill="#000" stroke="#000" stroke-width="0.35" textLength="20.6" lengthAdjust="spacingAndGlyphs">E-Bus 2A 230mA</text><text x="767.3" y="254.1" font-family="Liberation Sans" font-weight="bold" font-size="3.5" fill="#000" stroke="#000" stroke-width="0.35" textLength="22.6" lengthAdjust="spacingAndGlyphs">Serial No. 0000001</text></g>
<g transform="rotate(180 758.5 382.05)"><rect x="720.2" y="369.6" width="76.6" height="24.9" rx="1.2" fill="#ebebeb" stroke="#333" stroke-width="0.8"/><text x="726.1" y="385.5" font-family="Liberation Sans" font-size="13.8" fill="#222" stroke="#222" stroke-width="0.6" textLength="12.4" lengthAdjust="spacingAndGlyphs">iQ</text><circle cx="744.8" cy="375.9" r="1.3" fill="#1b7d34"/><text x="748" y="377.2" font-family="Liberation Sans" font-weight="bold" font-size="3.6" fill="#000" stroke="#000" stroke-width="0.35" textLength="11.7" lengthAdjust="spacingAndGlyphs">EtherCAT</text><circle cx="744.8" cy="379.9" r="1.3" fill="#1b7d34"/><text x="748" y="381.2" font-family="Liberation Sans" font-weight="bold" font-size="3.6" fill="#000" stroke="#000" stroke-width="0.35" textLength="9.7" lengthAdjust="spacingAndGlyphs">Link/Act</text><circle cx="744.8" cy="383.9" r="1.3" fill="#1b7d34"/><text x="748" y="385.2" font-family="Liberation Sans" font-weight="bold" font-size="3.6" fill="#000" stroke="#000" stroke-width="0.35" textLength="6.2" lengthAdjust="spacingAndGlyphs">24 V</text><circle cx="744.8" cy="387.9" r="1.3" fill="#1b7d34"/><text x="748" y="389.2" font-family="Liberation Sans" font-weight="bold" font-size="3.6" fill="#000" stroke="#000" stroke-width="0.35" textLength="6.2" lengthAdjust="spacingAndGlyphs">48 V</text><text x="767.4" y="377.4" font-family="Liberation Sans" font-weight="bold" font-size="5" fill="#a00000" stroke="#500" stroke-width="0.3" textLength="24.3" lengthAdjust="spacingAndGlyphs">BECKHOFF</text><text x="767.4" y="381.6" font-family="Liberation Sans" font-weight="bold" font-size="3.5" fill="#000" stroke="#000" stroke-width="0.35" textLength="16.5" lengthAdjust="spacingAndGlyphs">EL9410-0012</text><text x="767.4" y="386" font-family="Liberation Sans" font-weight="bold" font-size="3.5" fill="#000" stroke="#000" stroke-width="0.35" textLength="20.6" lengthAdjust="spacingAndGlyphs">E-Bus 2A 230mA</text><text x="767.4" y="390.4" font-family="Liberation Sans" font-weight="bold" font-size="3.5" fill="#000" stroke="#000" stroke-width="0.35" textLength="22.6" lengthAdjust="spacingAndGlyphs">Serial No. 0000001</text></g>
<g transform="rotate(180 557.7 382.05)"><rect x="519.4" y="369.6" width="76.6" height="24.9" rx="1.2" fill="#ebebeb" stroke="#333" stroke-width="0.8"/><text x="525.3" y="385.5" font-family="Liberation Sans" font-size="13.8" fill="#222" stroke="#222" stroke-width="0.6" textLength="12.4" lengthAdjust="spacingAndGlyphs">iQ</text><circle cx="544" cy="375.9" r="1.3" fill="#1b7d34"/><text x="547.2" y="377.2" font-family="Liberation Sans" font-weight="bold" font-size="3.6" fill="#000" stroke="#000" stroke-width="0.35" textLength="11.7" lengthAdjust="spacingAndGlyphs">EtherCAT</text><circle cx="544" cy="379.9" r="1.3" fill="#1b7d34"/><text x="547.2" y="381.2" font-family="Liberation Sans" font-weight="bold" font-size="3.6" fill="#000" stroke="#000" stroke-width="0.35" textLength="9.7" lengthAdjust="spacingAndGlyphs">Link/Act</text><circle cx="544" cy="383.9" r="1.3" fill="#1b7d34"/><text x="547.2" y="385.2" font-family="Liberation Sans" font-weight="bold" font-size="3.6" fill="#000" stroke="#000" stroke-width="0.35" textLength="6.2" lengthAdjust="spacingAndGlyphs">24 V</text><circle cx="544" cy="387.9" r="1.3" fill="#1b7d34"/><text x="547.2" y="389.2" font-family="Liberation Sans" font-weight="bold" font-size="3.6" fill="#000" stroke="#000" stroke-width="0.35" textLength="6.2" lengthAdjust="spacingAndGlyphs">48 V</text><text x="566.6" y="377.4" font-family="Liberation Sans" font-weight="bold" font-size="5" fill="#a00000" stroke="#500" stroke-width="0.3" textLength="24.3" lengthAdjust="spacingAndGlyphs">BECKHOFF</text><text x="566.6" y="381.6" font-family="Liberation Sans" font-weight="bold" font-size="3.5" fill="#000" stroke="#000" stroke-width="0.35" textLength="16.5" lengthAdjust="spacingAndGlyphs">EL9410-0012</text><text x="566.6" y="386" font-family="Liberation Sans" font-weight="bold" font-size="3.5" fill="#000" stroke="#000" stroke-width="0.35" textLength="20.6" lengthAdjust="spacingAndGlyphs">E-Bus 2A 230mA</text><text x="566.6" y="390.4" font-family="Liberation Sans" font-weight="bold" font-size="3.5" fill="#000" stroke="#000" stroke-width="0.35" textLength="22.6" lengthAdjust="spacingAndGlyphs">Serial No. 0000001</text></g>
<g transform="rotate(180 356.4 382.05)"><rect x="318.1" y="369.6" width="76.6" height="24.9" rx="1.2" fill="#ebebeb" stroke="#333" stroke-width="0.8"/><text x="324" y="385.5" font-family="Liberation Sans" font-size="13.8" fill="#222" stroke="#222" stroke-width="0.6" textLength="12.4" lengthAdjust="spacingAndGlyphs">iQ</text><circle cx="342.7" cy="375.9" r="1.3" fill="#1b7d34"/><text x="345.9" y="377.2" font-family="Liberation Sans" font-weight="bold" font-size="3.6" fill="#000" stroke="#000" stroke-width="0.35" textLength="11.7" lengthAdjust="spacingAndGlyphs">EtherCAT</text><circle cx="342.7" cy="379.9" r="1.3" fill="#1b7d34"/><text x="345.9" y="381.2" font-family="Liberation Sans" font-weight="bold" font-size="3.6" fill="#000" stroke="#000" stroke-width="0.35" textLength="9.7" lengthAdjust="spacingAndGlyphs">Link/Act</text><circle cx="342.7" cy="383.9" r="1.3" fill="#1b7d34"/><text x="345.9" y="385.2" font-family="Liberation Sans" font-weight="bold" font-size="3.6" fill="#000" stroke="#000" stroke-width="0.35" textLength="6.2" lengthAdjust="spacingAndGlyphs">24 V</text><circle cx="342.7" cy="387.9" r="1.3" fill="#1b7d34"/><text x="345.9" y="389.2" font-family="Liberation Sans" font-weight="bold" font-size="3.6" fill="#000" stroke="#000" stroke-width="0.35" textLength="6.2" lengthAdjust="spacingAndGlyphs">48 V</text><text x="365.3" y="377.4" font-family="Liberation Sans" font-weight="bold" font-size="5" fill="#a00000" stroke="#500" stroke-width="0.3" textLength="24.3" lengthAdjust="spacingAndGlyphs">BECKHOFF</text><text x="365.3" y="381.6" font-family="Liberation Sans" font-weight="bold" font-size="3.5" fill="#000" stroke="#000" stroke-width="0.35" textLength="16.5" lengthAdjust="spacingAndGlyphs">EL9410-0012</text><text x="365.3" y="386" font-family="Liberation Sans" font-weight="bold" font-size="3.5" fill="#000" stroke="#000" stroke-width="0.35" textLength="20.6" lengthAdjust="spacingAndGlyphs">E-Bus 2A 230mA</text><text x="365.3" y="390.4" font-family="Liberation Sans" font-weight="bold" font-size="3.5" fill="#000" stroke="#000" stroke-width="0.35" textLength="22.6" lengthAdjust="spacingAndGlyphs">Serial No. 0000001</text></g>
<g transform="rotate(180 219.8 313.65)"><rect x="181.5" y="301.2" width="76.6" height="24.9" rx="1.2" fill="#ebebeb" stroke="#333" stroke-width="0.8"/><text x="187.4" y="317.1" font-family="Liberation Sans" font-size="13.8" fill="#222" stroke="#222" stroke-width="0.6" textLength="12.4" lengthAdjust="spacingAndGlyphs">iQ</text><circle cx="206.1" cy="307.5" r="1.3" fill="#1b7d34"/><text x="209.3" y="308.8" font-family="Liberation Sans" font-weight="bold" font-size="3.6" fill="#000" stroke="#000" stroke-width="0.35" textLength="11.7" lengthAdjust="spacingAndGlyphs">EtherCAT</text><circle cx="206.1" cy="311.5" r="1.3" fill="#1b7d34"/><text x="209.3" y="312.8" font-family="Liberation Sans" font-weight="bold" font-size="3.6" fill="#000" stroke="#000" stroke-width="0.35" textLength="9.7" lengthAdjust="spacingAndGlyphs">Link/Act</text><circle cx="206.1" cy="315.5" r="1.3" fill="#1b7d34"/><text x="209.3" y="316.8" font-family="Liberation Sans" font-weight="bold" font-size="3.6" fill="#000" stroke="#000" stroke-width="0.35" textLength="6.2" lengthAdjust="spacingAndGlyphs">24 V</text><circle cx="206.1" cy="319.5" r="1.3" fill="#1b7d34"/><text x="209.3" y="320.8" font-family="Liberation Sans" font-weight="bold" font-size="3.6" fill="#000" stroke="#000" stroke-width="0.35" textLength="6.2" lengthAdjust="spacingAndGlyphs">48 V</text><text x="228.7" y="309" font-family="Liberation Sans" font-weight="bold" font-size="5" fill="#a00000" stroke="#500" stroke-width="0.3" textLength="24.3" lengthAdjust="spacingAndGlyphs">BECKHOFF</text><text x="228.7" y="313.2" font-family="Liberation Sans" font-weight="bold" font-size="3.5" fill="#000" stroke="#000" stroke-width="0.35" textLength="16.5" lengthAdjust="spacingAndGlyphs">EL9410-0012</text><text x="228.7" y="317.6" font-family="Liberation Sans" font-weight="bold" font-size="3.5" fill="#000" stroke="#000" stroke-width="0.35" textLength="20.6" lengthAdjust="spacingAndGlyphs">E-Bus 2A 230mA</text><text x="228.7" y="322" font-family="Liberation Sans" font-weight="bold" font-size="3.5" fill="#000" stroke="#000" stroke-width="0.35" textLength="22.6" lengthAdjust="spacingAndGlyphs">Serial No. 0000001</text></g>
<g><rect x="856.2" y="301.6" width="76.6" height="24.9" rx="1.2" fill="#ebebeb" stroke="#333" stroke-width="0.8"/><text x="862.1" y="317.5" font-family="Liberation Sans" font-size="13.8" fill="#222" stroke="#222" stroke-width="0.6" textLength="12.4" lengthAdjust="spacingAndGlyphs">iQ</text><circle cx="880.8" cy="307.9" r="1.3" fill="#1b7d34"/><text x="884" y="309.2" font-family="Liberation Sans" font-weight="bold" font-size="3.6" fill="#000" stroke="#000" stroke-width="0.35" textLength="11.7" lengthAdjust="spacingAndGlyphs">EtherCAT</text><circle cx="880.8" cy="311.9" r="1.3" fill="#1b7d34"/><text x="884" y="313.2" font-family="Liberation Sans" font-weight="bold" font-size="3.6" fill="#000" stroke="#000" stroke-width="0.35" textLength="9.7" lengthAdjust="spacingAndGlyphs">Link/Act</text><circle cx="880.8" cy="315.9" r="1.3" fill="#1b7d34"/><text x="884" y="317.2" font-family="Liberation Sans" font-weight="bold" font-size="3.6" fill="#000" stroke="#000" stroke-width="0.35" textLength="6.2" lengthAdjust="spacingAndGlyphs">24 V</text><circle cx="880.8" cy="319.9" r="1.3" fill="#1b7d34"/><text x="884" y="321.2" font-family="Liberation Sans" font-weight="bold" font-size="3.6" fill="#000" stroke="#000" stroke-width="0.35" textLength="6.2" lengthAdjust="spacingAndGlyphs">48 V</text><text x="903.4" y="309.4" font-family="Liberation Sans" font-weight="bold" font-size="5" fill="#a00000" stroke="#500" stroke-width="0.3" textLength="24.3" lengthAdjust="spacingAndGlyphs">BECKHOFF</text><text x="903.4" y="313.6" font-family="Liberation Sans" font-weight="bold" font-size="3.5" fill="#000" stroke="#000" stroke-width="0.35" textLength="16.5" lengthAdjust="spacingAndGlyphs">EL9410-0012</text><text x="903.4" y="318" font-family="Liberation Sans" font-weight="bold" font-size="3.5" fill="#000" stroke="#000" stroke-width="0.35" textLength="20.6" lengthAdjust="spacingAndGlyphs">E-Bus 2A 230mA</text><text x="903.4" y="322.4" font-family="Liberation Sans" font-weight="bold" font-size="3.5" fill="#000" stroke="#000" stroke-width="0.35" textLength="22.6" lengthAdjust="spacingAndGlyphs">Serial No. 0000001</text></g>
<g transform="translate(328.5,100.2)"><path d="M0.5,2.2 Q0.5,0 2.7,0 H38.3 Q40.5,0 40.5,2.2 V112.8 H0.5 Z" fill="#e4e4e4" stroke="#3c3c3c" stroke-width="0.8"/><rect x="15.6" y="12.1" width="9.8" height="20.7" fill="#ebebeb" stroke="#555" stroke-width="0.5"/><circle cx="20.5" cy="16.7" r="1.2" fill="#6a6a6a"/><circle cx="20.5" cy="30" r="1.1" fill="#6a6a6a"/><rect x="15.9" y="31.1" width="9.1" height="5.4" fill="#353535"/><rect x="16.9" y="32.7" width="7.1" height="1.8" fill="#7c8386"/><rect x="-1.2" y="36.3" width="43.3" height="13.6" fill="#b9b9b9" stroke="#505050" stroke-width="0.5"/><rect x="7.5" y="36.4" width="26" height="1.5" fill="#e2e2e2"/><path d="M-1.2,36.3 H5 L4.2,38.6 H-1.2 Z M42.1,36.3 H36 L36.8,38.6 H42.1 Z" fill="#4c4c4c"/><path d="M6.2,40.9 H11.3 V45.3 H6.2 Z M30.7,40.9 H35.3 V45.3 H30.7 Z" fill="#f4f4f4" stroke="#333" stroke-width="0.55"/><path d="M9.6,37.9 H31.8 V40.8 H29 V46.5 H26.1 V40.8 H15.9 V46.5 H13 V40.8 H9.6 Z" fill="#f4f4f4" stroke="#333" stroke-width="0.55"/><path d="M6.6,36.8 L5.6,40.6 M34.4,36.8 L35.4,40.6" stroke="#333" stroke-width="0.6"/><rect x="15.9" y="40.8" width="10.2" height="5.7" fill="#b8b8b8" stroke="#222" stroke-width="0.7"/><rect x="17.2" y="42" width="7.6" height="3.2" fill="#d0d0d0"/><rect x="17.7" y="52.2" width="5.5" height="6.3" fill="#d0d0d0" stroke="#444" stroke-width="0.5"/><rect x="13.2" y="47.7" width="14.6" height="4.4" fill="#ecebe2" stroke="#222" stroke-width="0.6"/><circle cx="10.2" cy="70.5" r="4.9" fill="#a9afb3" stroke="#3a3a3a" stroke-width="0.9"/><circle cx="10.2" cy="70.5" r="1.7" fill="#c4c9cc" stroke="#50565a" stroke-width="0.5"/><circle cx="30.8" cy="70.5" r="4.9" fill="#a9afb3" stroke="#3a3a3a" stroke-width="0.9"/><circle cx="30.8" cy="70.5" r="1.7" fill="#c4c9cc" stroke="#50565a" stroke-width="0.5"/><line x1="0.5" y1="75.9" x2="40.5" y2="75.9" stroke="#555" stroke-width="0.5"/><line x1="0.5" y1="90.1" x2="40.5" y2="90.1" stroke="#333" stroke-width="0.9"/><rect x="0.5" y="92.6" width="40" height="3" fill="#f0f0f0" stroke="#555" stroke-width="0.4"/><path d="M4.0,92.4 V96.8 Q4.0,99.6 6.6,99.6 Q9.2,99.6 9.2,96.8 V92.4" fill="#f2f2f2" stroke="#555" stroke-width="0.45"/><circle cx="6.6" cy="92" r="0.7" fill="#666"/><path d="M17.9,92.4 V96.8 Q17.9,99.6 20.5,99.6 Q23.1,99.6 23.1,96.8 V92.4" fill="#f2f2f2" stroke="#555" stroke-width="0.45"/><circle cx="20.5" cy="92" r="0.7" fill="#666"/><path d="M31.8,92.4 V96.8 Q31.8,99.6 34.4,99.6 Q37.0,99.6 37.0,96.8 V92.4" fill="#f2f2f2" stroke="#555" stroke-width="0.45"/><circle cx="34.4" cy="92" r="0.7" fill="#666"/><circle cx="20.5" cy="103" r="2.7" fill="#7c7c7c" stroke="#1e1e1e" stroke-width="0.7"/><circle cx="20.5" cy="103" r="1.1" fill="#b0b0b0"/><circle cx="4.6" cy="108.8" r="2.6" fill="#7c7c7c" stroke="#1e1e1e" stroke-width="0.7"/><circle cx="4.6" cy="108.8" r="1.1" fill="#b0b0b0"/><circle cx="36.4" cy="108.8" r="2.6" fill="#7c7c7c" stroke="#1e1e1e" stroke-width="0.7"/><circle cx="36.4" cy="108.8" r="1.1" fill="#b0b0b0"/><rect x="-2.6" y="100" width="3" height="12.8" fill="#161616"/><rect x="40.1" y="100" width="3" height="12.8" fill="#161616"/><path d="M0.8,112.8 H40.2 L33.5,125 H7.5 Z" fill="#e6e6e6" stroke="#444" stroke-width="0.5"/><path d="M7.5,112.8 H33.5 V139 L27.8,149.4 H13.2 L7.5,139 Z" fill="#1d1d1d" stroke="#0e0e0e" stroke-width="0.5"/><path d="M13.2,149.4 V139 H27.8 V149.4" fill="none" stroke="#3a3a3a" stroke-width="0.5"/><line x1="10.6" y1="122" x2="10.6" y2="138.5" stroke="#484848" stroke-width="0.8"/><line x1="15.4" y1="122" x2="15.4" y2="138.5" stroke="#484848" stroke-width="0.8"/><line x1="25.6" y1="122" x2="25.6" y2="138.5" stroke="#484848" stroke-width="0.8"/><line x1="30.4" y1="122" x2="30.4" y2="138.5" stroke="#484848" stroke-width="0.8"/><circle cx="13.2" cy="117" r="1.9" fill="#2a2a2a" stroke="#c0c0c0" stroke-width="0.5"/><circle cx="27.8" cy="117" r="1.9" fill="#2a2a2a" stroke="#c0c0c0" stroke-width="0.5"/><line x1="20.5" y1="114" x2="20.5" y2="121.4" stroke="#d8d8d8" stroke-width="0.8"/></g>
<g transform="translate(384.5,100.2)"><path d="M0.5,2.2 Q0.5,0 2.7,0 H38.3 Q40.5,0 40.5,2.2 V112.8 H0.5 Z" fill="#e4e4e4" stroke="#3c3c3c" stroke-width="0.8"/><rect x="15.6" y="12.1" width="9.8" height="20.7" fill="#ebebeb" stroke="#555" stroke-width="0.5"/><circle cx="20.5" cy="16.7" r="1.2" fill="#6a6a6a"/><circle cx="20.5" cy="30" r="1.1" fill="#6a6a6a"/><rect x="15.9" y="31.1" width="9.1" height="5.4" fill="#353535"/><rect x="16.9" y="32.7" width="7.1" height="1.8" fill="#7c8386"/><rect x="-1.2" y="36.3" width="43.3" height="13.6" fill="#b9b9b9" stroke="#505050" stroke-width="0.5"/><rect x="7.5" y="36.4" width="26" height="1.5" fill="#e2e2e2"/><path d="M-1.2,36.3 H5 L4.2,38.6 H-1.2 Z M42.1,36.3 H36 L36.8,38.6 H42.1 Z" fill="#4c4c4c"/><path d="M6.2,40.9 H11.3 V45.3 H6.2 Z M30.7,40.9 H35.3 V45.3 H30.7 Z" fill="#f4f4f4" stroke="#333" stroke-width="0.55"/><path d="M9.6,37.9 H31.8 V40.8 H29 V46.5 H26.1 V40.8 H15.9 V46.5 H13 V40.8 H9.6 Z" fill="#f4f4f4" stroke="#333" stroke-width="0.55"/><path d="M6.6,36.8 L5.6,40.6 M34.4,36.8 L35.4,40.6" stroke="#333" stroke-width="0.6"/><rect x="15.9" y="40.8" width="10.2" height="5.7" fill="#b8b8b8" stroke="#222" stroke-width="0.7"/><rect x="17.2" y="42" width="7.6" height="3.2" fill="#d0d0d0"/><rect x="17.7" y="52.2" width="5.5" height="6.3" fill="#d0d0d0" stroke="#444" stroke-width="0.5"/><rect x="13.2" y="47.7" width="14.6" height="4.4" fill="#ecebe2" stroke="#222" stroke-width="0.6"/><circle cx="10.2" cy="70.5" r="4.9" fill="#a9afb3" stroke="#3a3a3a" stroke-width="0.9"/><circle cx="10.2" cy="70.5" r="1.7" fill="#c4c9cc" stroke="#50565a" stroke-width="0.5"/><circle cx="30.8" cy="70.5" r="4.9" fill="#a9afb3" stroke="#3a3a3a" stroke-width="0.9"/><circle cx="30.8" cy="70.5" r="1.7" fill="#c4c9cc" stroke="#50565a" stroke-width="0.5"/><line x1="0.5" y1="75.9" x2="40.5" y2="75.9" stroke="#555" stroke-width="0.5"/><line x1="0.5" y1="90.1" x2="40.5" y2="90.1" stroke="#333" stroke-width="0.9"/><rect x="0.5" y="92.6" width="40" height="3" fill="#f0f0f0" stroke="#555" stroke-width="0.4"/><path d="M4.0,92.4 V96.8 Q4.0,99.6 6.6,99.6 Q9.2,99.6 9.2,96.8 V92.4" fill="#f2f2f2" stroke="#555" stroke-width="0.45"/><circle cx="6.6" cy="92" r="0.7" fill="#666"/><path d="M17.9,92.4 V96.8 Q17.9,99.6 20.5,99.6 Q23.1,99.6 23.1,96.8 V92.4" fill="#f2f2f2" stroke="#555" stroke-width="0.45"/><circle cx="20.5" cy="92" r="0.7" fill="#666"/><path d="M31.8,92.4 V96.8 Q31.8,99.6 34.4,99.6 Q37.0,99.6 37.0,96.8 V92.4" fill="#f2f2f2" stroke="#555" stroke-width="0.45"/><circle cx="34.4" cy="92" r="0.7" fill="#666"/><circle cx="20.5" cy="103" r="2.7" fill="#7c7c7c" stroke="#1e1e1e" stroke-width="0.7"/><circle cx="20.5" cy="103" r="1.1" fill="#b0b0b0"/><circle cx="4.6" cy="108.8" r="2.6" fill="#7c7c7c" stroke="#1e1e1e" stroke-width="0.7"/><circle cx="4.6" cy="108.8" r="1.1" fill="#b0b0b0"/><circle cx="36.4" cy="108.8" r="2.6" fill="#7c7c7c" stroke="#1e1e1e" stroke-width="0.7"/><circle cx="36.4" cy="108.8" r="1.1" fill="#b0b0b0"/><rect x="-2.6" y="100" width="3" height="12.8" fill="#161616"/><rect x="40.1" y="100" width="3" height="12.8" fill="#161616"/><path d="M0.8,112.8 H40.2 L33.5,125 H7.5 Z" fill="#e6e6e6" stroke="#444" stroke-width="0.5"/><path d="M7.5,112.8 H33.5 V139 L27.8,149.4 H13.2 L7.5,139 Z" fill="#1d1d1d" stroke="#0e0e0e" stroke-width="0.5"/><path d="M13.2,149.4 V139 H27.8 V149.4" fill="none" stroke="#3a3a3a" stroke-width="0.5"/><line x1="10.6" y1="122" x2="10.6" y2="138.5" stroke="#484848" stroke-width="0.8"/><line x1="15.4" y1="122" x2="15.4" y2="138.5" stroke="#484848" stroke-width="0.8"/><line x1="25.6" y1="122" x2="25.6" y2="138.5" stroke="#484848" stroke-width="0.8"/><line x1="30.4" y1="122" x2="30.4" y2="138.5" stroke="#484848" stroke-width="0.8"/><circle cx="13.2" cy="117" r="1.9" fill="#2a2a2a" stroke="#c0c0c0" stroke-width="0.5"/><circle cx="27.8" cy="117" r="1.9" fill="#2a2a2a" stroke="#c0c0c0" stroke-width="0.5"/><line x1="20.5" y1="114" x2="20.5" y2="121.4" stroke="#d8d8d8" stroke-width="0.8"/></g>
<g transform="translate(616,100.2)"><path d="M0.5,2.2 Q0.5,0 2.7,0 H38.3 Q40.5,0 40.5,2.2 V112.8 H0.5 Z" fill="#e4e4e4" stroke="#3c3c3c" stroke-width="0.8"/><rect x="15.6" y="12.1" width="9.8" height="20.7" fill="#ebebeb" stroke="#555" stroke-width="0.5"/><circle cx="20.5" cy="16.7" r="1.2" fill="#6a6a6a"/><circle cx="20.5" cy="30" r="1.1" fill="#6a6a6a"/><rect x="15.9" y="31.1" width="9.1" height="5.4" fill="#353535"/><rect x="16.9" y="32.7" width="7.1" height="1.8" fill="#7c8386"/><rect x="-1.2" y="36.3" width="43.3" height="13.6" fill="#b9b9b9" stroke="#505050" stroke-width="0.5"/><rect x="7.5" y="36.4" width="26" height="1.5" fill="#e2e2e2"/><path d="M-1.2,36.3 H5 L4.2,38.6 H-1.2 Z M42.1,36.3 H36 L36.8,38.6 H42.1 Z" fill="#4c4c4c"/><path d="M6.2,40.9 H11.3 V45.3 H6.2 Z M30.7,40.9 H35.3 V45.3 H30.7 Z" fill="#f4f4f4" stroke="#333" stroke-width="0.55"/><path d="M9.6,37.9 H31.8 V40.8 H29 V46.5 H26.1 V40.8 H15.9 V46.5 H13 V40.8 H9.6 Z" fill="#f4f4f4" stroke="#333" stroke-width="0.55"/><path d="M6.6,36.8 L5.6,40.6 M34.4,36.8 L35.4,40.6" stroke="#333" stroke-width="0.6"/><rect x="15.9" y="40.8" width="10.2" height="5.7" fill="#b8b8b8" stroke="#222" stroke-width="0.7"/><rect x="17.2" y="42" width="7.6" height="3.2" fill="#d0d0d0"/><rect x="0.5" y="49.8" width="40" height="26.1" fill="#1b1c1e" stroke="#111" stroke-width="0.5"/><rect x="18.2" y="53.7" width="4.6" height="3.9" fill="#cfcfcf"/><rect x="13.2" y="47.7" width="14.6" height="4.4" fill="#ecebe2" stroke="#222" stroke-width="0.6"/><circle cx="10.2" cy="70.5" r="4.9" fill="#a9afb3" stroke="#3a3a3a" stroke-width="0.9"/><circle cx="10.2" cy="70.5" r="1.7" fill="#c4c9cc" stroke="#50565a" stroke-width="0.5"/><circle cx="30.8" cy="70.5" r="4.9" fill="#a9afb3" stroke="#3a3a3a" stroke-width="0.9"/><circle cx="30.8" cy="70.5" r="1.7" fill="#c4c9cc" stroke="#50565a" stroke-width="0.5"/><line x1="0.5" y1="75.9" x2="40.5" y2="75.9" stroke="#555" stroke-width="0.5"/><line x1="0.5" y1="90.1" x2="40.5" y2="90.1" stroke="#333" stroke-width="0.9"/><rect x="0.5" y="92.6" width="40" height="3" fill="#f0f0f0" stroke="#555" stroke-width="0.4"/><path d="M4.0,92.4 V96.8 Q4.0,99.6 6.6,99.6 Q9.2,99.6 9.2,96.8 V92.4" fill="#f2f2f2" stroke="#555" stroke-width="0.45"/><circle cx="6.6" cy="92" r="0.7" fill="#666"/><path d="M17.9,92.4 V96.8 Q17.9,99.6 20.5,99.6 Q23.1,99.6 23.1,96.8 V92.4" fill="#f2f2f2" stroke="#555" stroke-width="0.45"/><circle cx="20.5" cy="92" r="0.7" fill="#666"/><path d="M31.8,92.4 V96.8 Q31.8,99.6 34.4,99.6 Q37.0,99.6 37.0,96.8 V92.4" fill="#f2f2f2" stroke="#555" stroke-width="0.45"/><circle cx="34.4" cy="92" r="0.7" fill="#666"/><circle cx="20.5" cy="103" r="2.7" fill="#7c7c7c" stroke="#1e1e1e" stroke-width="0.7"/><circle cx="20.5" cy="103" r="1.1" fill="#b0b0b0"/><circle cx="4.6" cy="108.8" r="2.6" fill="#7c7c7c" stroke="#1e1e1e" stroke-width="0.7"/><circle cx="4.6" cy="108.8" r="1.1" fill="#b0b0b0"/><circle cx="36.4" cy="108.8" r="2.6" fill="#7c7c7c" stroke="#1e1e1e" stroke-width="0.7"/><circle cx="36.4" cy="108.8" r="1.1" fill="#b0b0b0"/><rect x="-2.6" y="100" width="3" height="12.8" fill="#161616"/><rect x="40.1" y="100" width="3" height="12.8" fill="#161616"/><path d="M0.8,112.8 H40.2 L33.5,125 H7.5 Z" fill="#e6e6e6" stroke="#444" stroke-width="0.5"/><path d="M7.5,112.8 H33.5 V139 L27.8,149.4 H13.2 L7.5,139 Z" fill="#1d1d1d" stroke="#0e0e0e" stroke-width="0.5"/><path d="M13.2,149.4 V139 H27.8 V149.4" fill="none" stroke="#3a3a3a" stroke-width="0.5"/><line x1="10.6" y1="122" x2="10.6" y2="138.5" stroke="#484848" stroke-width="0.8"/><line x1="15.4" y1="122" x2="15.4" y2="138.5" stroke="#484848" stroke-width="0.8"/><line x1="25.6" y1="122" x2="25.6" y2="138.5" stroke="#484848" stroke-width="0.8"/><line x1="30.4" y1="122" x2="30.4" y2="138.5" stroke="#484848" stroke-width="0.8"/><circle cx="13.2" cy="117" r="1.9" fill="#2a2a2a" stroke="#c0c0c0" stroke-width="0.5"/><circle cx="27.8" cy="117" r="1.9" fill="#2a2a2a" stroke="#c0c0c0" stroke-width="0.5"/><line x1="20.5" y1="114" x2="20.5" y2="121.4" stroke="#d8d8d8" stroke-width="0.8"/></g>
<g transform="translate(260.5,527.2) rotate(180)"><path d="M0.5,2.2 Q0.5,0 2.7,0 H38.3 Q40.5,0 40.5,2.2 V112.8 H0.5 Z" fill="#e4e4e4" stroke="#3c3c3c" stroke-width="0.8"/><rect x="15.6" y="12.1" width="9.8" height="20.7" fill="#ebebeb" stroke="#555" stroke-width="0.5"/><circle cx="20.5" cy="16.7" r="1.2" fill="#6a6a6a"/><circle cx="20.5" cy="30" r="1.1" fill="#6a6a6a"/><rect x="15.9" y="31.1" width="9.1" height="5.4" fill="#353535"/><rect x="16.9" y="32.7" width="7.1" height="1.8" fill="#7c8386"/><rect x="-1.2" y="36.3" width="43.3" height="13.6" fill="#b9b9b9" stroke="#505050" stroke-width="0.5"/><rect x="7.5" y="36.4" width="26" height="1.5" fill="#e2e2e2"/><path d="M-1.2,36.3 H5 L4.2,38.6 H-1.2 Z M42.1,36.3 H36 L36.8,38.6 H42.1 Z" fill="#4c4c4c"/><path d="M6.2,40.9 H11.3 V45.3 H6.2 Z M30.7,40.9 H35.3 V45.3 H30.7 Z" fill="#f4f4f4" stroke="#333" stroke-width="0.55"/><path d="M9.6,37.9 H31.8 V40.8 H29 V46.5 H26.1 V40.8 H15.9 V46.5 H13 V40.8 H9.6 Z" fill="#f4f4f4" stroke="#333" stroke-width="0.55"/><path d="M6.6,36.8 L5.6,40.6 M34.4,36.8 L35.4,40.6" stroke="#333" stroke-width="0.6"/><rect x="15.9" y="40.8" width="10.2" height="5.7" fill="#b8b8b8" stroke="#222" stroke-width="0.7"/><rect x="17.2" y="42" width="7.6" height="3.2" fill="#d0d0d0"/><rect x="17.7" y="52.2" width="5.5" height="6.3" fill="#d0d0d0" stroke="#444" stroke-width="0.5"/><rect x="13.2" y="47.7" width="14.6" height="4.4" fill="#ecebe2" stroke="#222" stroke-width="0.6"/><circle cx="10.2" cy="70.5" r="4.9" fill="#a9afb3" stroke="#3a3a3a" stroke-width="0.9"/><circle cx="10.2" cy="70.5" r="1.7" fill="#c4c9cc" stroke="#50565a" stroke-width="0.5"/><circle cx="30.8" cy="70.5" r="4.9" fill="#a9afb3" stroke="#3a3a3a" stroke-width="0.9"/><circle cx="30.8" cy="70.5" r="1.7" fill="#c4c9cc" stroke="#50565a" stroke-width="0.5"/><line x1="0.5" y1="75.9" x2="40.5" y2="75.9" stroke="#555" stroke-width="0.5"/><line x1="0.5" y1="90.1" x2="40.5" y2="90.1" stroke="#333" stroke-width="0.9"/><rect x="0.5" y="92.6" width="40" height="3" fill="#f0f0f0" stroke="#555" stroke-width="0.4"/><path d="M4.0,92.4 V96.8 Q4.0,99.6 6.6,99.6 Q9.2,99.6 9.2,96.8 V92.4" fill="#f2f2f2" stroke="#555" stroke-width="0.45"/><circle cx="6.6" cy="92" r="0.7" fill="#666"/><path d="M17.9,92.4 V96.8 Q17.9,99.6 20.5,99.6 Q23.1,99.6 23.1,96.8 V92.4" fill="#f2f2f2" stroke="#555" stroke-width="0.45"/><circle cx="20.5" cy="92" r="0.7" fill="#666"/><path d="M31.8,92.4 V96.8 Q31.8,99.6 34.4,99.6 Q37.0,99.6 37.0,96.8 V92.4" fill="#f2f2f2" stroke="#555" stroke-width="0.45"/><circle cx="34.4" cy="92" r="0.7" fill="#666"/><circle cx="20.5" cy="103" r="2.7" fill="#7c7c7c" stroke="#1e1e1e" stroke-width="0.7"/><circle cx="20.5" cy="103" r="1.1" fill="#b0b0b0"/><circle cx="4.6" cy="108.8" r="2.6" fill="#7c7c7c" stroke="#1e1e1e" stroke-width="0.7"/><circle cx="4.6" cy="108.8" r="1.1" fill="#b0b0b0"/><circle cx="36.4" cy="108.8" r="2.6" fill="#7c7c7c" stroke="#1e1e1e" stroke-width="0.7"/><circle cx="36.4" cy="108.8" r="1.1" fill="#b0b0b0"/><rect x="-2.6" y="100" width="3" height="12.8" fill="#161616"/><rect x="40.1" y="100" width="3" height="12.8" fill="#161616"/><path d="M0.8,112.8 H40.2 L33.5,125 H7.5 Z" fill="#e6e6e6" stroke="#444" stroke-width="0.5"/><path d="M7.5,112.8 H33.5 V139 L27.8,149.4 H13.2 L7.5,139 Z" fill="#1d1d1d" stroke="#0e0e0e" stroke-width="0.5"/><path d="M13.2,149.4 V139 H27.8 V149.4" fill="none" stroke="#3a3a3a" stroke-width="0.5"/><line x1="10.6" y1="122" x2="10.6" y2="138.5" stroke="#484848" stroke-width="0.8"/><line x1="15.4" y1="122" x2="15.4" y2="138.5" stroke="#484848" stroke-width="0.8"/><line x1="25.6" y1="122" x2="25.6" y2="138.5" stroke="#484848" stroke-width="0.8"/><line x1="30.4" y1="122" x2="30.4" y2="138.5" stroke="#484848" stroke-width="0.8"/><circle cx="13.2" cy="117" r="1.9" fill="#2a2a2a" stroke="#c0c0c0" stroke-width="0.5"/><circle cx="27.8" cy="117" r="1.9" fill="#2a2a2a" stroke="#c0c0c0" stroke-width="0.5"/><line x1="20.5" y1="114" x2="20.5" y2="121.4" stroke="#d8d8d8" stroke-width="0.8"/></g>
<g transform="translate(313.07,527.2) rotate(180)"><path d="M0.5,2.2 Q0.5,0 2.7,0 H38.3 Q40.5,0 40.5,2.2 V112.8 H0.5 Z" fill="#e4e4e4" stroke="#3c3c3c" stroke-width="0.8"/><rect x="15.6" y="12.1" width="9.8" height="20.7" fill="#ebebeb" stroke="#555" stroke-width="0.5"/><circle cx="20.5" cy="16.7" r="1.2" fill="#6a6a6a"/><circle cx="20.5" cy="30" r="1.1" fill="#6a6a6a"/><rect x="15.9" y="31.1" width="9.1" height="5.4" fill="#353535"/><rect x="16.9" y="32.7" width="7.1" height="1.8" fill="#7c8386"/><rect x="-1.2" y="36.3" width="43.3" height="13.6" fill="#b9b9b9" stroke="#505050" stroke-width="0.5"/><rect x="7.5" y="36.4" width="26" height="1.5" fill="#e2e2e2"/><path d="M-1.2,36.3 H5 L4.2,38.6 H-1.2 Z M42.1,36.3 H36 L36.8,38.6 H42.1 Z" fill="#4c4c4c"/><path d="M6.2,40.9 H11.3 V45.3 H6.2 Z M30.7,40.9 H35.3 V45.3 H30.7 Z" fill="#f4f4f4" stroke="#333" stroke-width="0.55"/><path d="M9.6,37.9 H31.8 V40.8 H29 V46.5 H26.1 V40.8 H15.9 V46.5 H13 V40.8 H9.6 Z" fill="#f4f4f4" stroke="#333" stroke-width="0.55"/><path d="M6.6,36.8 L5.6,40.6 M34.4,36.8 L35.4,40.6" stroke="#333" stroke-width="0.6"/><rect x="15.9" y="40.8" width="10.2" height="5.7" fill="#b8b8b8" stroke="#222" stroke-width="0.7"/><rect x="17.2" y="42" width="7.6" height="3.2" fill="#d0d0d0"/><rect x="17.7" y="52.2" width="5.5" height="6.3" fill="#d0d0d0" stroke="#444" stroke-width="0.5"/><rect x="13.2" y="47.7" width="14.6" height="4.4" fill="#ecebe2" stroke="#222" stroke-width="0.6"/><circle cx="10.2" cy="70.5" r="4.9" fill="#a9afb3" stroke="#3a3a3a" stroke-width="0.9"/><circle cx="10.2" cy="70.5" r="1.7" fill="#c4c9cc" stroke="#50565a" stroke-width="0.5"/><circle cx="30.8" cy="70.5" r="4.9" fill="#a9afb3" stroke="#3a3a3a" stroke-width="0.9"/><circle cx="30.8" cy="70.5" r="1.7" fill="#c4c9cc" stroke="#50565a" stroke-width="0.5"/><line x1="0.5" y1="75.9" x2="40.5" y2="75.9" stroke="#555" stroke-width="0.5"/><line x1="0.5" y1="90.1" x2="40.5" y2="90.1" stroke="#333" stroke-width="0.9"/><rect x="0.5" y="92.6" width="40" height="3" fill="#f0f0f0" stroke="#555" stroke-width="0.4"/><path d="M4.0,92.4 V96.8 Q4.0,99.6 6.6,99.6 Q9.2,99.6 9.2,96.8 V92.4" fill="#f2f2f2" stroke="#555" stroke-width="0.45"/><circle cx="6.6" cy="92" r="0.7" fill="#666"/><path d="M17.9,92.4 V96.8 Q17.9,99.6 20.5,99.6 Q23.1,99.6 23.1,96.8 V92.4" fill="#f2f2f2" stroke="#555" stroke-width="0.45"/><circle cx="20.5" cy="92" r="0.7" fill="#666"/><path d="M31.8,92.4 V96.8 Q31.8,99.6 34.4,99.6 Q37.0,99.6 37.0,96.8 V92.4" fill="#f2f2f2" stroke="#555" stroke-width="0.45"/><circle cx="34.4" cy="92" r="0.7" fill="#666"/><circle cx="20.5" cy="103" r="2.7" fill="#7c7c7c" stroke="#1e1e1e" stroke-width="0.7"/><circle cx="20.5" cy="103" r="1.1" fill="#b0b0b0"/><circle cx="4.6" cy="108.8" r="2.6" fill="#7c7c7c" stroke="#1e1e1e" stroke-width="0.7"/><circle cx="4.6" cy="108.8" r="1.1" fill="#b0b0b0"/><circle cx="36.4" cy="108.8" r="2.6" fill="#7c7c7c" stroke="#1e1e1e" stroke-width="0.7"/><circle cx="36.4" cy="108.8" r="1.1" fill="#b0b0b0"/><rect x="-2.6" y="100" width="3" height="12.8" fill="#161616"/><rect x="40.1" y="100" width="3" height="12.8" fill="#161616"/><path d="M0.8,112.8 H40.2 L33.5,125 H7.5 Z" fill="#e6e6e6" stroke="#444" stroke-width="0.5"/><path d="M7.5,112.8 H33.5 V139 L27.8,149.4 H13.2 L7.5,139 Z" fill="#1d1d1d" stroke="#0e0e0e" stroke-width="0.5"/><path d="M13.2,149.4 V139 H27.8 V149.4" fill="none" stroke="#3a3a3a" stroke-width="0.5"/><line x1="10.6" y1="122" x2="10.6" y2="138.5" stroke="#484848" stroke-width="0.8"/><line x1="15.4" y1="122" x2="15.4" y2="138.5" stroke="#484848" stroke-width="0.8"/><line x1="25.6" y1="122" x2="25.6" y2="138.5" stroke="#484848" stroke-width="0.8"/><line x1="30.4" y1="122" x2="30.4" y2="138.5" stroke="#484848" stroke-width="0.8"/><circle cx="13.2" cy="117" r="1.9" fill="#2a2a2a" stroke="#c0c0c0" stroke-width="0.5"/><circle cx="27.8" cy="117" r="1.9" fill="#2a2a2a" stroke="#c0c0c0" stroke-width="0.5"/><line x1="20.5" y1="114" x2="20.5" y2="121.4" stroke="#d8d8d8" stroke-width="0.8"/></g>
<g transform="translate(365.64,527.2) rotate(180)"><path d="M0.5,2.2 Q0.5,0 2.7,0 H38.3 Q40.5,0 40.5,2.2 V112.8 H0.5 Z" fill="#e4e4e4" stroke="#3c3c3c" stroke-width="0.8"/><rect x="15.6" y="12.1" width="9.8" height="20.7" fill="#ebebeb" stroke="#555" stroke-width="0.5"/><circle cx="20.5" cy="16.7" r="1.2" fill="#6a6a6a"/><circle cx="20.5" cy="30" r="1.1" fill="#6a6a6a"/><rect x="15.9" y="31.1" width="9.1" height="5.4" fill="#353535"/><rect x="16.9" y="32.7" width="7.1" height="1.8" fill="#7c8386"/><rect x="-1.2" y="36.3" width="43.3" height="13.6" fill="#b9b9b9" stroke="#505050" stroke-width="0.5"/><rect x="7.5" y="36.4" width="26" height="1.5" fill="#e2e2e2"/><path d="M-1.2,36.3 H5 L4.2,38.6 H-1.2 Z M42.1,36.3 H36 L36.8,38.6 H42.1 Z" fill="#4c4c4c"/><path d="M6.2,40.9 H11.3 V45.3 H6.2 Z M30.7,40.9 H35.3 V45.3 H30.7 Z" fill="#f4f4f4" stroke="#333" stroke-width="0.55"/><path d="M9.6,37.9 H31.8 V40.8 H29 V46.5 H26.1 V40.8 H15.9 V46.5 H13 V40.8 H9.6 Z" fill="#f4f4f4" stroke="#333" stroke-width="0.55"/><path d="M6.6,36.8 L5.6,40.6 M34.4,36.8 L35.4,40.6" stroke="#333" stroke-width="0.6"/><rect x="15.9" y="40.8" width="10.2" height="5.7" fill="#b8b8b8" stroke="#222" stroke-width="0.7"/><rect x="17.2" y="42" width="7.6" height="3.2" fill="#d0d0d0"/><rect x="17.7" y="52.2" width="5.5" height="6.3" fill="#d0d0d0" stroke="#444" stroke-width="0.5"/><rect x="13.2" y="47.7" width="14.6" height="4.4" fill="#ecebe2" stroke="#222" stroke-width="0.6"/><circle cx="10.2" cy="70.5" r="4.9" fill="#a9afb3" stroke="#3a3a3a" stroke-width="0.9"/><circle cx="10.2" cy="70.5" r="1.7" fill="#c4c9cc" stroke="#50565a" stroke-width="0.5"/><circle cx="30.8" cy="70.5" r="4.9" fill="#a9afb3" stroke="#3a3a3a" stroke-width="0.9"/><circle cx="30.8" cy="70.5" r="1.7" fill="#c4c9cc" stroke="#50565a" stroke-width="0.5"/><line x1="0.5" y1="75.9" x2="40.5" y2="75.9" stroke="#555" stroke-width="0.5"/><line x1="0.5" y1="90.1" x2="40.5" y2="90.1" stroke="#333" stroke-width="0.9"/><rect x="0.5" y="92.6" width="40" height="3" fill="#f0f0f0" stroke="#555" stroke-width="0.4"/><path d="M4.0,92.4 V96.8 Q4.0,99.6 6.6,99.6 Q9.2,99.6 9.2,96.8 V92.4" fill="#f2f2f2" stroke="#555" stroke-width="0.45"/><circle cx="6.6" cy="92" r="0.7" fill="#666"/><path d="M17.9,92.4 V96.8 Q17.9,99.6 20.5,99.6 Q23.1,99.6 23.1,96.8 V92.4" fill="#f2f2f2" stroke="#555" stroke-width="0.45"/><circle cx="20.5" cy="92" r="0.7" fill="#666"/><path d="M31.8,92.4 V96.8 Q31.8,99.6 34.4,99.6 Q37.0,99.6 37.0,96.8 V92.4" fill="#f2f2f2" stroke="#555" stroke-width="0.45"/><circle cx="34.4" cy="92" r="0.7" fill="#666"/><circle cx="20.5" cy="103" r="2.7" fill="#7c7c7c" stroke="#1e1e1e" stroke-width="0.7"/><circle cx="20.5" cy="103" r="1.1" fill="#b0b0b0"/><circle cx="4.6" cy="108.8" r="2.6" fill="#7c7c7c" stroke="#1e1e1e" stroke-width="0.7"/><circle cx="4.6" cy="108.8" r="1.1" fill="#b0b0b0"/><circle cx="36.4" cy="108.8" r="2.6" fill="#7c7c7c" stroke="#1e1e1e" stroke-width="0.7"/><circle cx="36.4" cy="108.8" r="1.1" fill="#b0b0b0"/><rect x="-2.6" y="100" width="3" height="12.8" fill="#161616"/><rect x="40.1" y="100" width="3" height="12.8" fill="#161616"/><path d="M0.8,112.8 H40.2 L33.5,125 H7.5 Z" fill="#e6e6e6" stroke="#444" stroke-width="0.5"/><path d="M7.5,112.8 H33.5 V139 L27.8,149.4 H13.2 L7.5,139 Z" fill="#1d1d1d" stroke="#0e0e0e" stroke-width="0.5"/><path d="M13.2,149.4 V139 H27.8 V149.4" fill="none" stroke="#3a3a3a" stroke-width="0.5"/><line x1="10.6" y1="122" x2="10.6" y2="138.5" stroke="#484848" stroke-width="0.8"/><line x1="15.4" y1="122" x2="15.4" y2="138.5" stroke="#484848" stroke-width="0.8"/><line x1="25.6" y1="122" x2="25.6" y2="138.5" stroke="#484848" stroke-width="0.8"/><line x1="30.4" y1="122" x2="30.4" y2="138.5" stroke="#484848" stroke-width="0.8"/><circle cx="13.2" cy="117" r="1.9" fill="#2a2a2a" stroke="#c0c0c0" stroke-width="0.5"/><circle cx="27.8" cy="117" r="1.9" fill="#2a2a2a" stroke="#c0c0c0" stroke-width="0.5"/><line x1="20.5" y1="114" x2="20.5" y2="121.4" stroke="#d8d8d8" stroke-width="0.8"/></g>
<g transform="translate(418.21,527.2) rotate(180)"><path d="M0.5,2.2 Q0.5,0 2.7,0 H38.3 Q40.5,0 40.5,2.2 V112.8 H0.5 Z" fill="#e4e4e4" stroke="#3c3c3c" stroke-width="0.8"/><rect x="15.6" y="12.1" width="9.8" height="20.7" fill="#ebebeb" stroke="#555" stroke-width="0.5"/><circle cx="20.5" cy="16.7" r="1.2" fill="#6a6a6a"/><circle cx="20.5" cy="30" r="1.1" fill="#6a6a6a"/><rect x="15.9" y="31.1" width="9.1" height="5.4" fill="#353535"/><rect x="16.9" y="32.7" width="7.1" height="1.8" fill="#7c8386"/><rect x="-1.2" y="36.3" width="43.3" height="13.6" fill="#b9b9b9" stroke="#505050" stroke-width="0.5"/><rect x="7.5" y="36.4" width="26" height="1.5" fill="#e2e2e2"/><path d="M-1.2,36.3 H5 L4.2,38.6 H-1.2 Z M42.1,36.3 H36 L36.8,38.6 H42.1 Z" fill="#4c4c4c"/><path d="M6.2,40.9 H11.3 V45.3 H6.2 Z M30.7,40.9 H35.3 V45.3 H30.7 Z" fill="#f4f4f4" stroke="#333" stroke-width="0.55"/><path d="M9.6,37.9 H31.8 V40.8 H29 V46.5 H26.1 V40.8 H15.9 V46.5 H13 V40.8 H9.6 Z" fill="#f4f4f4" stroke="#333" stroke-width="0.55"/><path d="M6.6,36.8 L5.6,40.6 M34.4,36.8 L35.4,40.6" stroke="#333" stroke-width="0.6"/><rect x="15.9" y="40.8" width="10.2" height="5.7" fill="#b8b8b8" stroke="#222" stroke-width="0.7"/><rect x="17.2" y="42" width="7.6" height="3.2" fill="#d0d0d0"/><rect x="17.7" y="52.2" width="5.5" height="6.3" fill="#d0d0d0" stroke="#444" stroke-width="0.5"/><rect x="13.2" y="47.7" width="14.6" height="4.4" fill="#ecebe2" stroke="#222" stroke-width="0.6"/><circle cx="10.2" cy="70.5" r="4.9" fill="#a9afb3" stroke="#3a3a3a" stroke-width="0.9"/><circle cx="10.2" cy="70.5" r="1.7" fill="#c4c9cc" stroke="#50565a" stroke-width="0.5"/><circle cx="30.8" cy="70.5" r="4.9" fill="#a9afb3" stroke="#3a3a3a" stroke-width="0.9"/><circle cx="30.8" cy="70.5" r="1.7" fill="#c4c9cc" stroke="#50565a" stroke-width="0.5"/><line x1="0.5" y1="75.9" x2="40.5" y2="75.9" stroke="#555" stroke-width="0.5"/><line x1="0.5" y1="90.1" x2="40.5" y2="90.1" stroke="#333" stroke-width="0.9"/><rect x="0.5" y="92.6" width="40" height="3" fill="#f0f0f0" stroke="#555" stroke-width="0.4"/><path d="M4.0,92.4 V96.8 Q4.0,99.6 6.6,99.6 Q9.2,99.6 9.2,96.8 V92.4" fill="#f2f2f2" stroke="#555" stroke-width="0.45"/><circle cx="6.6" cy="92" r="0.7" fill="#666"/><path d="M17.9,92.4 V96.8 Q17.9,99.6 20.5,99.6 Q23.1,99.6 23.1,96.8 V92.4" fill="#f2f2f2" stroke="#555" stroke-width="0.45"/><circle cx="20.5" cy="92" r="0.7" fill="#666"/><path d="M31.8,92.4 V96.8 Q31.8,99.6 34.4,99.6 Q37.0,99.6 37.0,96.8 V92.4" fill="#f2f2f2" stroke="#555" stroke-width="0.45"/><circle cx="34.4" cy="92" r="0.7" fill="#666"/><circle cx="20.5" cy="103" r="2.7" fill="#7c7c7c" stroke="#1e1e1e" stroke-width="0.7"/><circle cx="20.5" cy="103" r="1.1" fill="#b0b0b0"/><circle cx="4.6" cy="108.8" r="2.6" fill="#7c7c7c" stroke="#1e1e1e" stroke-width="0.7"/><circle cx="4.6" cy="108.8" r="1.1" fill="#b0b0b0"/><circle cx="36.4" cy="108.8" r="2.6" fill="#7c7c7c" stroke="#1e1e1e" stroke-width="0.7"/><circle cx="36.4" cy="108.8" r="1.1" fill="#b0b0b0"/><rect x="-2.6" y="100" width="3" height="12.8" fill="#161616"/><rect x="40.1" y="100" width="3" height="12.8" fill="#161616"/><path d="M0.8,112.8 H40.2 L33.5,125 H7.5 Z" fill="#e6e6e6" stroke="#444" stroke-width="0.5"/><path d="M7.5,112.8 H33.5 V139 L27.8,149.4 H13.2 L7.5,139 Z" fill="#1d1d1d" stroke="#0e0e0e" stroke-width="0.5"/><path d="M13.2,149.4 V139 H27.8 V149.4" fill="none" stroke="#3a3a3a" stroke-width="0.5"/><line x1="10.6" y1="122" x2="10.6" y2="138.5" stroke="#484848" stroke-width="0.8"/><line x1="15.4" y1="122" x2="15.4" y2="138.5" stroke="#484848" stroke-width="0.8"/><line x1="25.6" y1="122" x2="25.6" y2="138.5" stroke="#484848" stroke-width="0.8"/><line x1="30.4" y1="122" x2="30.4" y2="138.5" stroke="#484848" stroke-width="0.8"/><circle cx="13.2" cy="117" r="1.9" fill="#2a2a2a" stroke="#c0c0c0" stroke-width="0.5"/><circle cx="27.8" cy="117" r="1.9" fill="#2a2a2a" stroke="#c0c0c0" stroke-width="0.5"/><line x1="20.5" y1="114" x2="20.5" y2="121.4" stroke="#d8d8d8" stroke-width="0.8"/></g>
<g transform="translate(470.78,527.2) rotate(180)"><path d="M0.5,2.2 Q0.5,0 2.7,0 H38.3 Q40.5,0 40.5,2.2 V112.8 H0.5 Z" fill="#e4e4e4" stroke="#3c3c3c" stroke-width="0.8"/><rect x="15.6" y="12.1" width="9.8" height="20.7" fill="#ebebeb" stroke="#555" stroke-width="0.5"/><circle cx="20.5" cy="16.7" r="1.2" fill="#6a6a6a"/><circle cx="20.5" cy="30" r="1.1" fill="#6a6a6a"/><rect x="15.9" y="31.1" width="9.1" height="5.4" fill="#353535"/><rect x="16.9" y="32.7" width="7.1" height="1.8" fill="#7c8386"/><rect x="-1.2" y="36.3" width="43.3" height="13.6" fill="#b9b9b9" stroke="#505050" stroke-width="0.5"/><rect x="7.5" y="36.4" width="26" height="1.5" fill="#e2e2e2"/><path d="M-1.2,36.3 H5 L4.2,38.6 H-1.2 Z M42.1,36.3 H36 L36.8,38.6 H42.1 Z" fill="#4c4c4c"/><path d="M6.2,40.9 H11.3 V45.3 H6.2 Z M30.7,40.9 H35.3 V45.3 H30.7 Z" fill="#f4f4f4" stroke="#333" stroke-width="0.55"/><path d="M9.6,37.9 H31.8 V40.8 H29 V46.5 H26.1 V40.8 H15.9 V46.5 H13 V40.8 H9.6 Z" fill="#f4f4f4" stroke="#333" stroke-width="0.55"/><path d="M6.6,36.8 L5.6,40.6 M34.4,36.8 L35.4,40.6" stroke="#333" stroke-width="0.6"/><rect x="15.9" y="40.8" width="10.2" height="5.7" fill="#b8b8b8" stroke="#222" stroke-width="0.7"/><rect x="17.2" y="42" width="7.6" height="3.2" fill="#d0d0d0"/><rect x="17.7" y="52.2" width="5.5" height="6.3" fill="#d0d0d0" stroke="#444" stroke-width="0.5"/><rect x="13.2" y="47.7" width="14.6" height="4.4" fill="#ecebe2" stroke="#222" stroke-width="0.6"/><circle cx="10.2" cy="70.5" r="4.9" fill="#a9afb3" stroke="#3a3a3a" stroke-width="0.9"/><circle cx="10.2" cy="70.5" r="1.7" fill="#c4c9cc" stroke="#50565a" stroke-width="0.5"/><circle cx="30.8" cy="70.5" r="4.9" fill="#a9afb3" stroke="#3a3a3a" stroke-width="0.9"/><circle cx="30.8" cy="70.5" r="1.7" fill="#c4c9cc" stroke="#50565a" stroke-width="0.5"/><line x1="0.5" y1="75.9" x2="40.5" y2="75.9" stroke="#555" stroke-width="0.5"/><line x1="0.5" y1="90.1" x2="40.5" y2="90.1" stroke="#333" stroke-width="0.9"/><rect x="0.5" y="92.6" width="40" height="3" fill="#f0f0f0" stroke="#555" stroke-width="0.4"/><path d="M4.0,92.4 V96.8 Q4.0,99.6 6.6,99.6 Q9.2,99.6 9.2,96.8 V92.4" fill="#f2f2f2" stroke="#555" stroke-width="0.45"/><circle cx="6.6" cy="92" r="0.7" fill="#666"/><path d="M17.9,92.4 V96.8 Q17.9,99.6 20.5,99.6 Q23.1,99.6 23.1,96.8 V92.4" fill="#f2f2f2" stroke="#555" stroke-width="0.45"/><circle cx="20.5" cy="92" r="0.7" fill="#666"/><path d="M31.8,92.4 V96.8 Q31.8,99.6 34.4,99.6 Q37.0,99.6 37.0,96.8 V92.4" fill="#f2f2f2" stroke="#555" stroke-width="0.45"/><circle cx="34.4" cy="92" r="0.7" fill="#666"/><circle cx="20.5" cy="103" r="2.7" fill="#7c7c7c" stroke="#1e1e1e" stroke-width="0.7"/><circle cx="20.5" cy="103" r="1.1" fill="#b0b0b0"/><circle cx="4.6" cy="108.8" r="2.6" fill="#7c7c7c" stroke="#1e1e1e" stroke-width="0.7"/><circle cx="4.6" cy="108.8" r="1.1" fill="#b0b0b0"/><circle cx="36.4" cy="108.8" r="2.6" fill="#7c7c7c" stroke="#1e1e1e" stroke-width="0.7"/><circle cx="36.4" cy="108.8" r="1.1" fill="#b0b0b0"/><rect x="-2.6" y="100" width="3" height="12.8" fill="#161616"/><rect x="40.1" y="100" width="3" height="12.8" fill="#161616"/><path d="M0.8,112.8 H40.2 L33.5,125 H7.5 Z" fill="#e6e6e6" stroke="#444" stroke-width="0.5"/><path d="M7.5,112.8 H33.5 V139 L27.8,149.4 H13.2 L7.5,139 Z" fill="#1d1d1d" stroke="#0e0e0e" stroke-width="0.5"/><path d="M13.2,149.4 V139 H27.8 V149.4" fill="none" stroke="#3a3a3a" stroke-width="0.5"/><line x1="10.6" y1="122" x2="10.6" y2="138.5" stroke="#484848" stroke-width="0.8"/><line x1="15.4" y1="122" x2="15.4" y2="138.5" stroke="#484848" stroke-width="0.8"/><line x1="25.6" y1="122" x2="25.6" y2="138.5" stroke="#484848" stroke-width="0.8"/><line x1="30.4" y1="122" x2="30.4" y2="138.5" stroke="#484848" stroke-width="0.8"/><circle cx="13.2" cy="117" r="1.9" fill="#2a2a2a" stroke="#c0c0c0" stroke-width="0.5"/><circle cx="27.8" cy="117" r="1.9" fill="#2a2a2a" stroke="#c0c0c0" stroke-width="0.5"/><line x1="20.5" y1="114" x2="20.5" y2="121.4" stroke="#d8d8d8" stroke-width="0.8"/></g>
<g transform="translate(523.35,527.2) rotate(180)"><path d="M0.5,2.2 Q0.5,0 2.7,0 H38.3 Q40.5,0 40.5,2.2 V112.8 H0.5 Z" fill="#e4e4e4" stroke="#3c3c3c" stroke-width="0.8"/><rect x="15.6" y="12.1" width="9.8" height="20.7" fill="#ebebeb" stroke="#555" stroke-width="0.5"/><circle cx="20.5" cy="16.7" r="1.2" fill="#6a6a6a"/><circle cx="20.5" cy="30" r="1.1" fill="#6a6a6a"/><rect x="15.9" y="31.1" width="9.1" height="5.4" fill="#353535"/><rect x="16.9" y="32.7" width="7.1" height="1.8" fill="#7c8386"/><rect x="-1.2" y="36.3" width="43.3" height="13.6" fill="#b9b9b9" stroke="#505050" stroke-width="0.5"/><rect x="7.5" y="36.4" width="26" height="1.5" fill="#e2e2e2"/><path d="M-1.2,36.3 H5 L4.2,38.6 H-1.2 Z M42.1,36.3 H36 L36.8,38.6 H42.1 Z" fill="#4c4c4c"/><path d="M6.2,40.9 H11.3 V45.3 H6.2 Z M30.7,40.9 H35.3 V45.3 H30.7 Z" fill="#f4f4f4" stroke="#333" stroke-width="0.55"/><path d="M9.6,37.9 H31.8 V40.8 H29 V46.5 H26.1 V40.8 H15.9 V46.5 H13 V40.8 H9.6 Z" fill="#f4f4f4" stroke="#333" stroke-width="0.55"/><path d="M6.6,36.8 L5.6,40.6 M34.4,36.8 L35.4,40.6" stroke="#333" stroke-width="0.6"/><rect x="15.9" y="40.8" width="10.2" height="5.7" fill="#b8b8b8" stroke="#222" stroke-width="0.7"/><rect x="17.2" y="42" width="7.6" height="3.2" fill="#d0d0d0"/><rect x="17.7" y="52.2" width="5.5" height="6.3" fill="#d0d0d0" stroke="#444" stroke-width="0.5"/><rect x="13.2" y="47.7" width="14.6" height="4.4" fill="#ecebe2" stroke="#222" stroke-width="0.6"/><circle cx="10.2" cy="70.5" r="4.9" fill="#a9afb3" stroke="#3a3a3a" stroke-width="0.9"/><circle cx="10.2" cy="70.5" r="1.7" fill="#c4c9cc" stroke="#50565a" stroke-width="0.5"/><circle cx="30.8" cy="70.5" r="4.9" fill="#a9afb3" stroke="#3a3a3a" stroke-width="0.9"/><circle cx="30.8" cy="70.5" r="1.7" fill="#c4c9cc" stroke="#50565a" stroke-width="0.5"/><line x1="0.5" y1="75.9" x2="40.5" y2="75.9" stroke="#555" stroke-width="0.5"/><line x1="0.5" y1="90.1" x2="40.5" y2="90.1" stroke="#333" stroke-width="0.9"/><rect x="0.5" y="92.6" width="40" height="3" fill="#f0f0f0" stroke="#555" stroke-width="0.4"/><path d="M4.0,92.4 V96.8 Q4.0,99.6 6.6,99.6 Q9.2,99.6 9.2,96.8 V92.4" fill="#f2f2f2" stroke="#555" stroke-width="0.45"/><circle cx="6.6" cy="92" r="0.7" fill="#666"/><path d="M17.9,92.4 V96.8 Q17.9,99.6 20.5,99.6 Q23.1,99.6 23.1,96.8 V92.4" fill="#f2f2f2" stroke="#555" stroke-width="0.45"/><circle cx="20.5" cy="92" r="0.7" fill="#666"/><path d="M31.8,92.4 V96.8 Q31.8,99.6 34.4,99.6 Q37.0,99.6 37.0,96.8 V92.4" fill="#f2f2f2" stroke="#555" stroke-width="0.45"/><circle cx="34.4" cy="92" r="0.7" fill="#666"/><circle cx="20.5" cy="103" r="2.7" fill="#7c7c7c" stroke="#1e1e1e" stroke-width="0.7"/><circle cx="20.5" cy="103" r="1.1" fill="#b0b0b0"/><circle cx="4.6" cy="108.8" r="2.6" fill="#7c7c7c" stroke="#1e1e1e" stroke-width="0.7"/><circle cx="4.6" cy="108.8" r="1.1" fill="#b0b0b0"/><circle cx="36.4" cy="108.8" r="2.6" fill="#7c7c7c" stroke="#1e1e1e" stroke-width="0.7"/><circle cx="36.4" cy="108.8" r="1.1" fill="#b0b0b0"/><rect x="-2.6" y="100" width="3" height="12.8" fill="#161616"/><rect x="40.1" y="100" width="3" height="12.8" fill="#161616"/><path d="M0.8,112.8 H40.2 L33.5,125 H7.5 Z" fill="#e6e6e6" stroke="#444" stroke-width="0.5"/><path d="M7.5,112.8 H33.5 V139 L27.8,149.4 H13.2 L7.5,139 Z" fill="#1d1d1d" stroke="#0e0e0e" stroke-width="0.5"/><path d="M13.2,149.4 V139 H27.8 V149.4" fill="none" stroke="#3a3a3a" stroke-width="0.5"/><line x1="10.6" y1="122" x2="10.6" y2="138.5" stroke="#484848" stroke-width="0.8"/><line x1="15.4" y1="122" x2="15.4" y2="138.5" stroke="#484848" stroke-width="0.8"/><line x1="25.6" y1="122" x2="25.6" y2="138.5" stroke="#484848" stroke-width="0.8"/><line x1="30.4" y1="122" x2="30.4" y2="138.5" stroke="#484848" stroke-width="0.8"/><circle cx="13.2" cy="117" r="1.9" fill="#2a2a2a" stroke="#c0c0c0" stroke-width="0.5"/><circle cx="27.8" cy="117" r="1.9" fill="#2a2a2a" stroke="#c0c0c0" stroke-width="0.5"/><line x1="20.5" y1="114" x2="20.5" y2="121.4" stroke="#d8d8d8" stroke-width="0.8"/></g>
<g transform="translate(575.92,527.2) rotate(180)"><path d="M0.5,2.2 Q0.5,0 2.7,0 H38.3 Q40.5,0 40.5,2.2 V112.8 H0.5 Z" fill="#e4e4e4" stroke="#3c3c3c" stroke-width="0.8"/><rect x="15.6" y="12.1" width="9.8" height="20.7" fill="#ebebeb" stroke="#555" stroke-width="0.5"/><circle cx="20.5" cy="16.7" r="1.2" fill="#6a6a6a"/><circle cx="20.5" cy="30" r="1.1" fill="#6a6a6a"/><rect x="15.9" y="31.1" width="9.1" height="5.4" fill="#353535"/><rect x="16.9" y="32.7" width="7.1" height="1.8" fill="#7c8386"/><rect x="-1.2" y="36.3" width="43.3" height="13.6" fill="#b9b9b9" stroke="#505050" stroke-width="0.5"/><rect x="7.5" y="36.4" width="26" height="1.5" fill="#e2e2e2"/><path d="M-1.2,36.3 H5 L4.2,38.6 H-1.2 Z M42.1,36.3 H36 L36.8,38.6 H42.1 Z" fill="#4c4c4c"/><path d="M6.2,40.9 H11.3 V45.3 H6.2 Z M30.7,40.9 H35.3 V45.3 H30.7 Z" fill="#f4f4f4" stroke="#333" stroke-width="0.55"/><path d="M9.6,37.9 H31.8 V40.8 H29 V46.5 H26.1 V40.8 H15.9 V46.5 H13 V40.8 H9.6 Z" fill="#f4f4f4" stroke="#333" stroke-width="0.55"/><path d="M6.6,36.8 L5.6,40.6 M34.4,36.8 L35.4,40.6" stroke="#333" stroke-width="0.6"/><rect x="15.9" y="40.8" width="10.2" height="5.7" fill="#b8b8b8" stroke="#222" stroke-width="0.7"/><rect x="17.2" y="42" width="7.6" height="3.2" fill="#d0d0d0"/><rect x="17.7" y="52.2" width="5.5" height="6.3" fill="#d0d0d0" stroke="#444" stroke-width="0.5"/><rect x="13.2" y="47.7" width="14.6" height="4.4" fill="#ecebe2" stroke="#222" stroke-width="0.6"/><circle cx="10.2" cy="70.5" r="4.9" fill="#a9afb3" stroke="#3a3a3a" stroke-width="0.9"/><circle cx="10.2" cy="70.5" r="1.7" fill="#c4c9cc" stroke="#50565a" stroke-width="0.5"/><circle cx="30.8" cy="70.5" r="4.9" fill="#a9afb3" stroke="#3a3a3a" stroke-width="0.9"/><circle cx="30.8" cy="70.5" r="1.7" fill="#c4c9cc" stroke="#50565a" stroke-width="0.5"/><line x1="0.5" y1="75.9" x2="40.5" y2="75.9" stroke="#555" stroke-width="0.5"/><line x1="0.5" y1="90.1" x2="40.5" y2="90.1" stroke="#333" stroke-width="0.9"/><rect x="0.5" y="92.6" width="40" height="3" fill="#f0f0f0" stroke="#555" stroke-width="0.4"/><path d="M4.0,92.4 V96.8 Q4.0,99.6 6.6,99.6 Q9.2,99.6 9.2,96.8 V92.4" fill="#f2f2f2" stroke="#555" stroke-width="0.45"/><circle cx="6.6" cy="92" r="0.7" fill="#666"/><path d="M17.9,92.4 V96.8 Q17.9,99.6 20.5,99.6 Q23.1,99.6 23.1,96.8 V92.4" fill="#f2f2f2" stroke="#555" stroke-width="0.45"/><circle cx="20.5" cy="92" r="0.7" fill="#666"/><path d="M31.8,92.4 V96.8 Q31.8,99.6 34.4,99.6 Q37.0,99.6 37.0,96.8 V92.4" fill="#f2f2f2" stroke="#555" stroke-width="0.45"/><circle cx="34.4" cy="92" r="0.7" fill="#666"/><circle cx="20.5" cy="103" r="2.7" fill="#7c7c7c" stroke="#1e1e1e" stroke-width="0.7"/><circle cx="20.5" cy="103" r="1.1" fill="#b0b0b0"/><circle cx="4.6" cy="108.8" r="2.6" fill="#7c7c7c" stroke="#1e1e1e" stroke-width="0.7"/><circle cx="4.6" cy="108.8" r="1.1" fill="#b0b0b0"/><circle cx="36.4" cy="108.8" r="2.6" fill="#7c7c7c" stroke="#1e1e1e" stroke-width="0.7"/><circle cx="36.4" cy="108.8" r="1.1" fill="#b0b0b0"/><rect x="-2.6" y="100" width="3" height="12.8" fill="#161616"/><rect x="40.1" y="100" width="3" height="12.8" fill="#161616"/><path d="M0.8,112.8 H40.2 L33.5,125 H7.5 Z" fill="#e6e6e6" stroke="#444" stroke-width="0.5"/><path d="M7.5,112.8 H33.5 V139 L27.8,149.4 H13.2 L7.5,139 Z" fill="#1d1d1d" stroke="#0e0e0e" stroke-width="0.5"/><path d="M13.2,149.4 V139 H27.8 V149.4" fill="none" stroke="#3a3a3a" stroke-width="0.5"/><line x1="10.6" y1="122" x2="10.6" y2="138.5" stroke="#484848" stroke-width="0.8"/><line x1="15.4" y1="122" x2="15.4" y2="138.5" stroke="#484848" stroke-width="0.8"/><line x1="25.6" y1="122" x2="25.6" y2="138.5" stroke="#484848" stroke-width="0.8"/><line x1="30.4" y1="122" x2="30.4" y2="138.5" stroke="#484848" stroke-width="0.8"/><circle cx="13.2" cy="117" r="1.9" fill="#2a2a2a" stroke="#c0c0c0" stroke-width="0.5"/><circle cx="27.8" cy="117" r="1.9" fill="#2a2a2a" stroke="#c0c0c0" stroke-width="0.5"/><line x1="20.5" y1="114" x2="20.5" y2="121.4" stroke="#d8d8d8" stroke-width="0.8"/></g>
<g transform="translate(628.49,527.2) rotate(180)"><path d="M0.5,2.2 Q0.5,0 2.7,0 H38.3 Q40.5,0 40.5,2.2 V112.8 H0.5 Z" fill="#e4e4e4" stroke="#3c3c3c" stroke-width="0.8"/><rect x="15.6" y="12.1" width="9.8" height="20.7" fill="#ebebeb" stroke="#555" stroke-width="0.5"/><circle cx="20.5" cy="16.7" r="1.2" fill="#6a6a6a"/><circle cx="20.5" cy="30" r="1.1" fill="#6a6a6a"/><rect x="15.9" y="31.1" width="9.1" height="5.4" fill="#353535"/><rect x="16.9" y="32.7" width="7.1" height="1.8" fill="#7c8386"/><rect x="-1.2" y="36.3" width="43.3" height="13.6" fill="#b9b9b9" stroke="#505050" stroke-width="0.5"/><rect x="7.5" y="36.4" width="26" height="1.5" fill="#e2e2e2"/><path d="M-1.2,36.3 H5 L4.2,38.6 H-1.2 Z M42.1,36.3 H36 L36.8,38.6 H42.1 Z" fill="#4c4c4c"/><path d="M6.2,40.9 H11.3 V45.3 H6.2 Z M30.7,40.9 H35.3 V45.3 H30.7 Z" fill="#f4f4f4" stroke="#333" stroke-width="0.55"/><path d="M9.6,37.9 H31.8 V40.8 H29 V46.5 H26.1 V40.8 H15.9 V46.5 H13 V40.8 H9.6 Z" fill="#f4f4f4" stroke="#333" stroke-width="0.55"/><path d="M6.6,36.8 L5.6,40.6 M34.4,36.8 L35.4,40.6" stroke="#333" stroke-width="0.6"/><rect x="15.9" y="40.8" width="10.2" height="5.7" fill="#b8b8b8" stroke="#222" stroke-width="0.7"/><rect x="17.2" y="42" width="7.6" height="3.2" fill="#d0d0d0"/><rect x="17.7" y="52.2" width="5.5" height="6.3" fill="#d0d0d0" stroke="#444" stroke-width="0.5"/><rect x="13.2" y="47.7" width="14.6" height="4.4" fill="#ecebe2" stroke="#222" stroke-width="0.6"/><circle cx="10.2" cy="70.5" r="4.9" fill="#a9afb3" stroke="#3a3a3a" stroke-width="0.9"/><circle cx="10.2" cy="70.5" r="1.7" fill="#c4c9cc" stroke="#50565a" stroke-width="0.5"/><circle cx="30.8" cy="70.5" r="4.9" fill="#a9afb3" stroke="#3a3a3a" stroke-width="0.9"/><circle cx="30.8" cy="70.5" r="1.7" fill="#c4c9cc" stroke="#50565a" stroke-width="0.5"/><line x1="0.5" y1="75.9" x2="40.5" y2="75.9" stroke="#555" stroke-width="0.5"/><line x1="0.5" y1="90.1" x2="40.5" y2="90.1" stroke="#333" stroke-width="0.9"/><rect x="0.5" y="92.6" width="40" height="3" fill="#f0f0f0" stroke="#555" stroke-width="0.4"/><path d="M4.0,92.4 V96.8 Q4.0,99.6 6.6,99.6 Q9.2,99.6 9.2,96.8 V92.4" fill="#f2f2f2" stroke="#555" stroke-width="0.45"/><circle cx="6.6" cy="92" r="0.7" fill="#666"/><path d="M17.9,92.4 V96.8 Q17.9,99.6 20.5,99.6 Q23.1,99.6 23.1,96.8 V92.4" fill="#f2f2f2" stroke="#555" stroke-width="0.45"/><circle cx="20.5" cy="92" r="0.7" fill="#666"/><path d="M31.8,92.4 V96.8 Q31.8,99.6 34.4,99.6 Q37.0,99.6 37.0,96.8 V92.4" fill="#f2f2f2" stroke="#555" stroke-width="0.45"/><circle cx="34.4" cy="92" r="0.7" fill="#666"/><circle cx="20.5" cy="103" r="2.7" fill="#7c7c7c" stroke="#1e1e1e" stroke-width="0.7"/><circle cx="20.5" cy="103" r="1.1" fill="#b0b0b0"/><circle cx="4.6" cy="108.8" r="2.6" fill="#7c7c7c" stroke="#1e1e1e" stroke-width="0.7"/><circle cx="4.6" cy="108.8" r="1.1" fill="#b0b0b0"/><circle cx="36.4" cy="108.8" r="2.6" fill="#7c7c7c" stroke="#1e1e1e" stroke-width="0.7"/><circle cx="36.4" cy="108.8" r="1.1" fill="#b0b0b0"/><rect x="-2.6" y="100" width="3" height="12.8" fill="#161616"/><rect x="40.1" y="100" width="3" height="12.8" fill="#161616"/><path d="M0.8,112.8 H40.2 L33.5,125 H7.5 Z" fill="#e6e6e6" stroke="#444" stroke-width="0.5"/><path d="M7.5,112.8 H33.5 V139 L27.8,149.4 H13.2 L7.5,139 Z" fill="#1d1d1d" stroke="#0e0e0e" stroke-width="0.5"/><path d="M13.2,149.4 V139 H27.8 V149.4" fill="none" stroke="#3a3a3a" stroke-width="0.5"/><line x1="10.6" y1="122" x2="10.6" y2="138.5" stroke="#484848" stroke-width="0.8"/><line x1="15.4" y1="122" x2="15.4" y2="138.5" stroke="#484848" stroke-width="0.8"/><line x1="25.6" y1="122" x2="25.6" y2="138.5" stroke="#484848" stroke-width="0.8"/><line x1="30.4" y1="122" x2="30.4" y2="138.5" stroke="#484848" stroke-width="0.8"/><circle cx="13.2" cy="117" r="1.9" fill="#2a2a2a" stroke="#c0c0c0" stroke-width="0.5"/><circle cx="27.8" cy="117" r="1.9" fill="#2a2a2a" stroke="#c0c0c0" stroke-width="0.5"/><line x1="20.5" y1="114" x2="20.5" y2="121.4" stroke="#d8d8d8" stroke-width="0.8"/></g>
<g transform="translate(681.06,527.2) rotate(180)"><path d="M0.5,2.2 Q0.5,0 2.7,0 H38.3 Q40.5,0 40.5,2.2 V112.8 H0.5 Z" fill="#e4e4e4" stroke="#3c3c3c" stroke-width="0.8"/><rect x="15.6" y="12.1" width="9.8" height="20.7" fill="#ebebeb" stroke="#555" stroke-width="0.5"/><circle cx="20.5" cy="16.7" r="1.2" fill="#6a6a6a"/><circle cx="20.5" cy="30" r="1.1" fill="#6a6a6a"/><rect x="15.9" y="31.1" width="9.1" height="5.4" fill="#353535"/><rect x="16.9" y="32.7" width="7.1" height="1.8" fill="#7c8386"/><rect x="-1.2" y="36.3" width="43.3" height="13.6" fill="#b9b9b9" stroke="#505050" stroke-width="0.5"/><rect x="7.5" y="36.4" width="26" height="1.5" fill="#e2e2e2"/><path d="M-1.2,36.3 H5 L4.2,38.6 H-1.2 Z M42.1,36.3 H36 L36.8,38.6 H42.1 Z" fill="#4c4c4c"/><path d="M6.2,40.9 H11.3 V45.3 H6.2 Z M30.7,40.9 H35.3 V45.3 H30.7 Z" fill="#f4f4f4" stroke="#333" stroke-width="0.55"/><path d="M9.6,37.9 H31.8 V40.8 H29 V46.5 H26.1 V40.8 H15.9 V46.5 H13 V40.8 H9.6 Z" fill="#f4f4f4" stroke="#333" stroke-width="0.55"/><path d="M6.6,36.8 L5.6,40.6 M34.4,36.8 L35.4,40.6" stroke="#333" stroke-width="0.6"/><rect x="15.9" y="40.8" width="10.2" height="5.7" fill="#b8b8b8" stroke="#222" stroke-width="0.7"/><rect x="17.2" y="42" width="7.6" height="3.2" fill="#d0d0d0"/><rect x="17.7" y="52.2" width="5.5" height="6.3" fill="#d0d0d0" stroke="#444" stroke-width="0.5"/><rect x="13.2" y="47.7" width="14.6" height="4.4" fill="#ecebe2" stroke="#222" stroke-width="0.6"/><circle cx="10.2" cy="70.5" r="4.9" fill="#a9afb3" stroke="#3a3a3a" stroke-width="0.9"/><circle cx="10.2" cy="70.5" r="1.7" fill="#c4c9cc" stroke="#50565a" stroke-width="0.5"/><circle cx="30.8" cy="70.5" r="4.9" fill="#a9afb3" stroke="#3a3a3a" stroke-width="0.9"/><circle cx="30.8" cy="70.5" r="1.7" fill="#c4c9cc" stroke="#50565a" stroke-width="0.5"/><line x1="0.5" y1="75.9" x2="40.5" y2="75.9" stroke="#555" stroke-width="0.5"/><line x1="0.5" y1="90.1" x2="40.5" y2="90.1" stroke="#333" stroke-width="0.9"/><rect x="0.5" y="92.6" width="40" height="3" fill="#f0f0f0" stroke="#555" stroke-width="0.4"/><path d="M4.0,92.4 V96.8 Q4.0,99.6 6.6,99.6 Q9.2,99.6 9.2,96.8 V92.4" fill="#f2f2f2" stroke="#555" stroke-width="0.45"/><circle cx="6.6" cy="92" r="0.7" fill="#666"/><path d="M17.9,92.4 V96.8 Q17.9,99.6 20.5,99.6 Q23.1,99.6 23.1,96.8 V92.4" fill="#f2f2f2" stroke="#555" stroke-width="0.45"/><circle cx="20.5" cy="92" r="0.7" fill="#666"/><path d="M31.8,92.4 V96.8 Q31.8,99.6 34.4,99.6 Q37.0,99.6 37.0,96.8 V92.4" fill="#f2f2f2" stroke="#555" stroke-width="0.45"/><circle cx="34.4" cy="92" r="0.7" fill="#666"/><circle cx="20.5" cy="103" r="2.7" fill="#7c7c7c" stroke="#1e1e1e" stroke-width="0.7"/><circle cx="20.5" cy="103" r="1.1" fill="#b0b0b0"/><circle cx="4.6" cy="108.8" r="2.6" fill="#7c7c7c" stroke="#1e1e1e" stroke-width="0.7"/><circle cx="4.6" cy="108.8" r="1.1" fill="#b0b0b0"/><circle cx="36.4" cy="108.8" r="2.6" fill="#7c7c7c" stroke="#1e1e1e" stroke-width="0.7"/><circle cx="36.4" cy="108.8" r="1.1" fill="#b0b0b0"/><rect x="-2.6" y="100" width="3" height="12.8" fill="#161616"/><rect x="40.1" y="100" width="3" height="12.8" fill="#161616"/><path d="M0.8,112.8 H40.2 L33.5,125 H7.5 Z" fill="#e6e6e6" stroke="#444" stroke-width="0.5"/><path d="M7.5,112.8 H33.5 V139 L27.8,149.4 H13.2 L7.5,139 Z" fill="#1d1d1d" stroke="#0e0e0e" stroke-width="0.5"/><path d="M13.2,149.4 V139 H27.8 V149.4" fill="none" stroke="#3a3a3a" stroke-width="0.5"/><line x1="10.6" y1="122" x2="10.6" y2="138.5" stroke="#484848" stroke-width="0.8"/><line x1="15.4" y1="122" x2="15.4" y2="138.5" stroke="#484848" stroke-width="0.8"/><line x1="25.6" y1="122" x2="25.6" y2="138.5" stroke="#484848" stroke-width="0.8"/><line x1="30.4" y1="122" x2="30.4" y2="138.5" stroke="#484848" stroke-width="0.8"/><circle cx="13.2" cy="117" r="1.9" fill="#2a2a2a" stroke="#c0c0c0" stroke-width="0.5"/><circle cx="27.8" cy="117" r="1.9" fill="#2a2a2a" stroke="#c0c0c0" stroke-width="0.5"/><line x1="20.5" y1="114" x2="20.5" y2="121.4" stroke="#d8d8d8" stroke-width="0.8"/></g>
<g transform="translate(733.63,527.2) rotate(180)"><path d="M0.5,2.2 Q0.5,0 2.7,0 H38.3 Q40.5,0 40.5,2.2 V112.8 H0.5 Z" fill="#e4e4e4" stroke="#3c3c3c" stroke-width="0.8"/><rect x="15.6" y="12.1" width="9.8" height="20.7" fill="#ebebeb" stroke="#555" stroke-width="0.5"/><circle cx="20.5" cy="16.7" r="1.2" fill="#6a6a6a"/><circle cx="20.5" cy="30" r="1.1" fill="#6a6a6a"/><rect x="15.9" y="31.1" width="9.1" height="5.4" fill="#353535"/><rect x="16.9" y="32.7" width="7.1" height="1.8" fill="#7c8386"/><rect x="-1.2" y="36.3" width="43.3" height="13.6" fill="#b9b9b9" stroke="#505050" stroke-width="0.5"/><rect x="7.5" y="36.4" width="26" height="1.5" fill="#e2e2e2"/><path d="M-1.2,36.3 H5 L4.2,38.6 H-1.2 Z M42.1,36.3 H36 L36.8,38.6 H42.1 Z" fill="#4c4c4c"/><path d="M6.2,40.9 H11.3 V45.3 H6.2 Z M30.7,40.9 H35.3 V45.3 H30.7 Z" fill="#f4f4f4" stroke="#333" stroke-width="0.55"/><path d="M9.6,37.9 H31.8 V40.8 H29 V46.5 H26.1 V40.8 H15.9 V46.5 H13 V40.8 H9.6 Z" fill="#f4f4f4" stroke="#333" stroke-width="0.55"/><path d="M6.6,36.8 L5.6,40.6 M34.4,36.8 L35.4,40.6" stroke="#333" stroke-width="0.6"/><rect x="15.9" y="40.8" width="10.2" height="5.7" fill="#b8b8b8" stroke="#222" stroke-width="0.7"/><rect x="17.2" y="42" width="7.6" height="3.2" fill="#d0d0d0"/><rect x="17.7" y="52.2" width="5.5" height="6.3" fill="#d0d0d0" stroke="#444" stroke-width="0.5"/><rect x="13.2" y="47.7" width="14.6" height="4.4" fill="#ecebe2" stroke="#222" stroke-width="0.6"/><circle cx="10.2" cy="70.5" r="4.9" fill="#a9afb3" stroke="#3a3a3a" stroke-width="0.9"/><circle cx="10.2" cy="70.5" r="1.7" fill="#c4c9cc" stroke="#50565a" stroke-width="0.5"/><circle cx="30.8" cy="70.5" r="4.9" fill="#a9afb3" stroke="#3a3a3a" stroke-width="0.9"/><circle cx="30.8" cy="70.5" r="1.7" fill="#c4c9cc" stroke="#50565a" stroke-width="0.5"/><line x1="0.5" y1="75.9" x2="40.5" y2="75.9" stroke="#555" stroke-width="0.5"/><line x1="0.5" y1="90.1" x2="40.5" y2="90.1" stroke="#333" stroke-width="0.9"/><rect x="0.5" y="92.6" width="40" height="3" fill="#f0f0f0" stroke="#555" stroke-width="0.4"/><path d="M4.0,92.4 V96.8 Q4.0,99.6 6.6,99.6 Q9.2,99.6 9.2,96.8 V92.4" fill="#f2f2f2" stroke="#555" stroke-width="0.45"/><circle cx="6.6" cy="92" r="0.7" fill="#666"/><path d="M17.9,92.4 V96.8 Q17.9,99.6 20.5,99.6 Q23.1,99.6 23.1,96.8 V92.4" fill="#f2f2f2" stroke="#555" stroke-width="0.45"/><circle cx="20.5" cy="92" r="0.7" fill="#666"/><path d="M31.8,92.4 V96.8 Q31.8,99.6 34.4,99.6 Q37.0,99.6 37.0,96.8 V92.4" fill="#f2f2f2" stroke="#555" stroke-width="0.45"/><circle cx="34.4" cy="92" r="0.7" fill="#666"/><circle cx="20.5" cy="103" r="2.7" fill="#7c7c7c" stroke="#1e1e1e" stroke-width="0.7"/><circle cx="20.5" cy="103" r="1.1" fill="#b0b0b0"/><circle cx="4.6" cy="108.8" r="2.6" fill="#7c7c7c" stroke="#1e1e1e" stroke-width="0.7"/><circle cx="4.6" cy="108.8" r="1.1" fill="#b0b0b0"/><circle cx="36.4" cy="108.8" r="2.6" fill="#7c7c7c" stroke="#1e1e1e" stroke-width="0.7"/><circle cx="36.4" cy="108.8" r="1.1" fill="#b0b0b0"/><rect x="-2.6" y="100" width="3" height="12.8" fill="#161616"/><rect x="40.1" y="100" width="3" height="12.8" fill="#161616"/><path d="M0.8,112.8 H40.2 L33.5,125 H7.5 Z" fill="#e6e6e6" stroke="#444" stroke-width="0.5"/><path d="M7.5,112.8 H33.5 V139 L27.8,149.4 H13.2 L7.5,139 Z" fill="#1d1d1d" stroke="#0e0e0e" stroke-width="0.5"/><path d="M13.2,149.4 V139 H27.8 V149.4" fill="none" stroke="#3a3a3a" stroke-width="0.5"/><line x1="10.6" y1="122" x2="10.6" y2="138.5" stroke="#484848" stroke-width="0.8"/><line x1="15.4" y1="122" x2="15.4" y2="138.5" stroke="#484848" stroke-width="0.8"/><line x1="25.6" y1="122" x2="25.6" y2="138.5" stroke="#484848" stroke-width="0.8"/><line x1="30.4" y1="122" x2="30.4" y2="138.5" stroke="#484848" stroke-width="0.8"/><circle cx="13.2" cy="117" r="1.9" fill="#2a2a2a" stroke="#c0c0c0" stroke-width="0.5"/><circle cx="27.8" cy="117" r="1.9" fill="#2a2a2a" stroke="#c0c0c0" stroke-width="0.5"/><line x1="20.5" y1="114" x2="20.5" y2="121.4" stroke="#d8d8d8" stroke-width="0.8"/></g>
<g transform="rotate(18.7 222.6 313.9) translate(243.1,527.2) rotate(180)"><path d="M0.5,2.2 Q0.5,0 2.7,0 H38.3 Q40.5,0 40.5,2.2 V112.8 H0.5 Z" fill="#e4e4e4" stroke="#3c3c3c" stroke-width="0.8"/><rect x="15.6" y="12.1" width="9.8" height="20.7" fill="#ebebeb" stroke="#555" stroke-width="0.5"/><circle cx="20.5" cy="16.7" r="1.2" fill="#6a6a6a"/><circle cx="20.5" cy="30" r="1.1" fill="#6a6a6a"/><rect x="15.9" y="31.1" width="9.1" height="5.4" fill="#353535"/><rect x="16.9" y="32.7" width="7.1" height="1.8" fill="#7c8386"/><rect x="-1.2" y="36.3" width="43.3" height="13.6" fill="#b9b9b9" stroke="#505050" stroke-width="0.5"/><rect x="7.5" y="36.4" width="26" height="1.5" fill="#e2e2e2"/><path d="M-1.2,36.3 H5 L4.2,38.6 H-1.2 Z M42.1,36.3 H36 L36.8,38.6 H42.1 Z" fill="#4c4c4c"/><path d="M6.2,40.9 H11.3 V45.3 H6.2 Z M30.7,40.9 H35.3 V45.3 H30.7 Z" fill="#f4f4f4" stroke="#333" stroke-width="0.55"/><path d="M9.6,37.9 H31.8 V40.8 H29 V46.5 H26.1 V40.8 H15.9 V46.5 H13 V40.8 H9.6 Z" fill="#f4f4f4" stroke="#333" stroke-width="0.55"/><path d="M6.6,36.8 L5.6,40.6 M34.4,36.8 L35.4,40.6" stroke="#333" stroke-width="0.6"/><rect x="15.9" y="40.8" width="10.2" height="5.7" fill="#b8b8b8" stroke="#222" stroke-width="0.7"/><rect x="17.2" y="42" width="7.6" height="3.2" fill="#d0d0d0"/><rect x="17.7" y="52.2" width="5.5" height="6.3" fill="#d0d0d0" stroke="#444" stroke-width="0.5"/><rect x="13.2" y="47.7" width="14.6" height="4.4" fill="#ecebe2" stroke="#222" stroke-width="0.6"/><circle cx="10.2" cy="70.5" r="4.9" fill="#a9afb3" stroke="#3a3a3a" stroke-width="0.9"/><circle cx="10.2" cy="70.5" r="1.7" fill="#c4c9cc" stroke="#50565a" stroke-width="0.5"/><circle cx="30.8" cy="70.5" r="4.9" fill="#a9afb3" stroke="#3a3a3a" stroke-width="0.9"/><circle cx="30.8" cy="70.5" r="1.7" fill="#c4c9cc" stroke="#50565a" stroke-width="0.5"/><line x1="0.5" y1="75.9" x2="40.5" y2="75.9" stroke="#555" stroke-width="0.5"/><line x1="0.5" y1="90.1" x2="40.5" y2="90.1" stroke="#333" stroke-width="0.9"/><rect x="0.5" y="92.6" width="40" height="3" fill="#f0f0f0" stroke="#555" stroke-width="0.4"/><path d="M4.0,92.4 V96.8 Q4.0,99.6 6.6,99.6 Q9.2,99.6 9.2,96.8 V92.4" fill="#f2f2f2" stroke="#555" stroke-width="0.45"/><circle cx="6.6" cy="92" r="0.7" fill="#666"/><path d="M17.9,92.4 V96.8 Q17.9,99.6 20.5,99.6 Q23.1,99.6 23.1,96.8 V92.4" fill="#f2f2f2" stroke="#555" stroke-width="0.45"/><circle cx="20.5" cy="92" r="0.7" fill="#666"/><path d="M31.8,92.4 V96.8 Q31.8,99.6 34.4,99.6 Q37.0,99.6 37.0,96.8 V92.4" fill="#f2f2f2" stroke="#555" stroke-width="0.45"/><circle cx="34.4" cy="92" r="0.7" fill="#666"/><circle cx="20.5" cy="103" r="2.7" fill="#7c7c7c" stroke="#1e1e1e" stroke-width="0.7"/><circle cx="20.5" cy="103" r="1.1" fill="#b0b0b0"/><circle cx="4.6" cy="108.8" r="2.6" fill="#7c7c7c" stroke="#1e1e1e" stroke-width="0.7"/><circle cx="4.6" cy="108.8" r="1.1" fill="#b0b0b0"/><circle cx="36.4" cy="108.8" r="2.6" fill="#7c7c7c" stroke="#1e1e1e" stroke-width="0.7"/><circle cx="36.4" cy="108.8" r="1.1" fill="#b0b0b0"/><rect x="-2.6" y="100" width="3" height="12.8" fill="#161616"/><rect x="40.1" y="100" width="3" height="12.8" fill="#161616"/><path d="M0.8,112.8 H40.2 L33.5,125 H7.5 Z" fill="#e6e6e6" stroke="#444" stroke-width="0.5"/><path d="M7.5,112.8 H33.5 V139 L27.8,149.4 H13.2 L7.5,139 Z" fill="#1d1d1d" stroke="#0e0e0e" stroke-width="0.5"/><path d="M13.2,149.4 V139 H27.8 V149.4" fill="none" stroke="#3a3a3a" stroke-width="0.5"/><line x1="10.6" y1="122" x2="10.6" y2="138.5" stroke="#484848" stroke-width="0.8"/><line x1="15.4" y1="122" x2="15.4" y2="138.5" stroke="#484848" stroke-width="0.8"/><line x1="25.6" y1="122" x2="25.6" y2="138.5" stroke="#484848" stroke-width="0.8"/><line x1="30.4" y1="122" x2="30.4" y2="138.5" stroke="#484848" stroke-width="0.8"/><circle cx="13.2" cy="117" r="1.9" fill="#2a2a2a" stroke="#c0c0c0" stroke-width="0.5"/><circle cx="27.8" cy="117" r="1.9" fill="#2a2a2a" stroke="#c0c0c0" stroke-width="0.5"/><line x1="20.5" y1="114" x2="20.5" y2="121.4" stroke="#d8d8d8" stroke-width="0.8"/></g>
</svg>
</body></html>
